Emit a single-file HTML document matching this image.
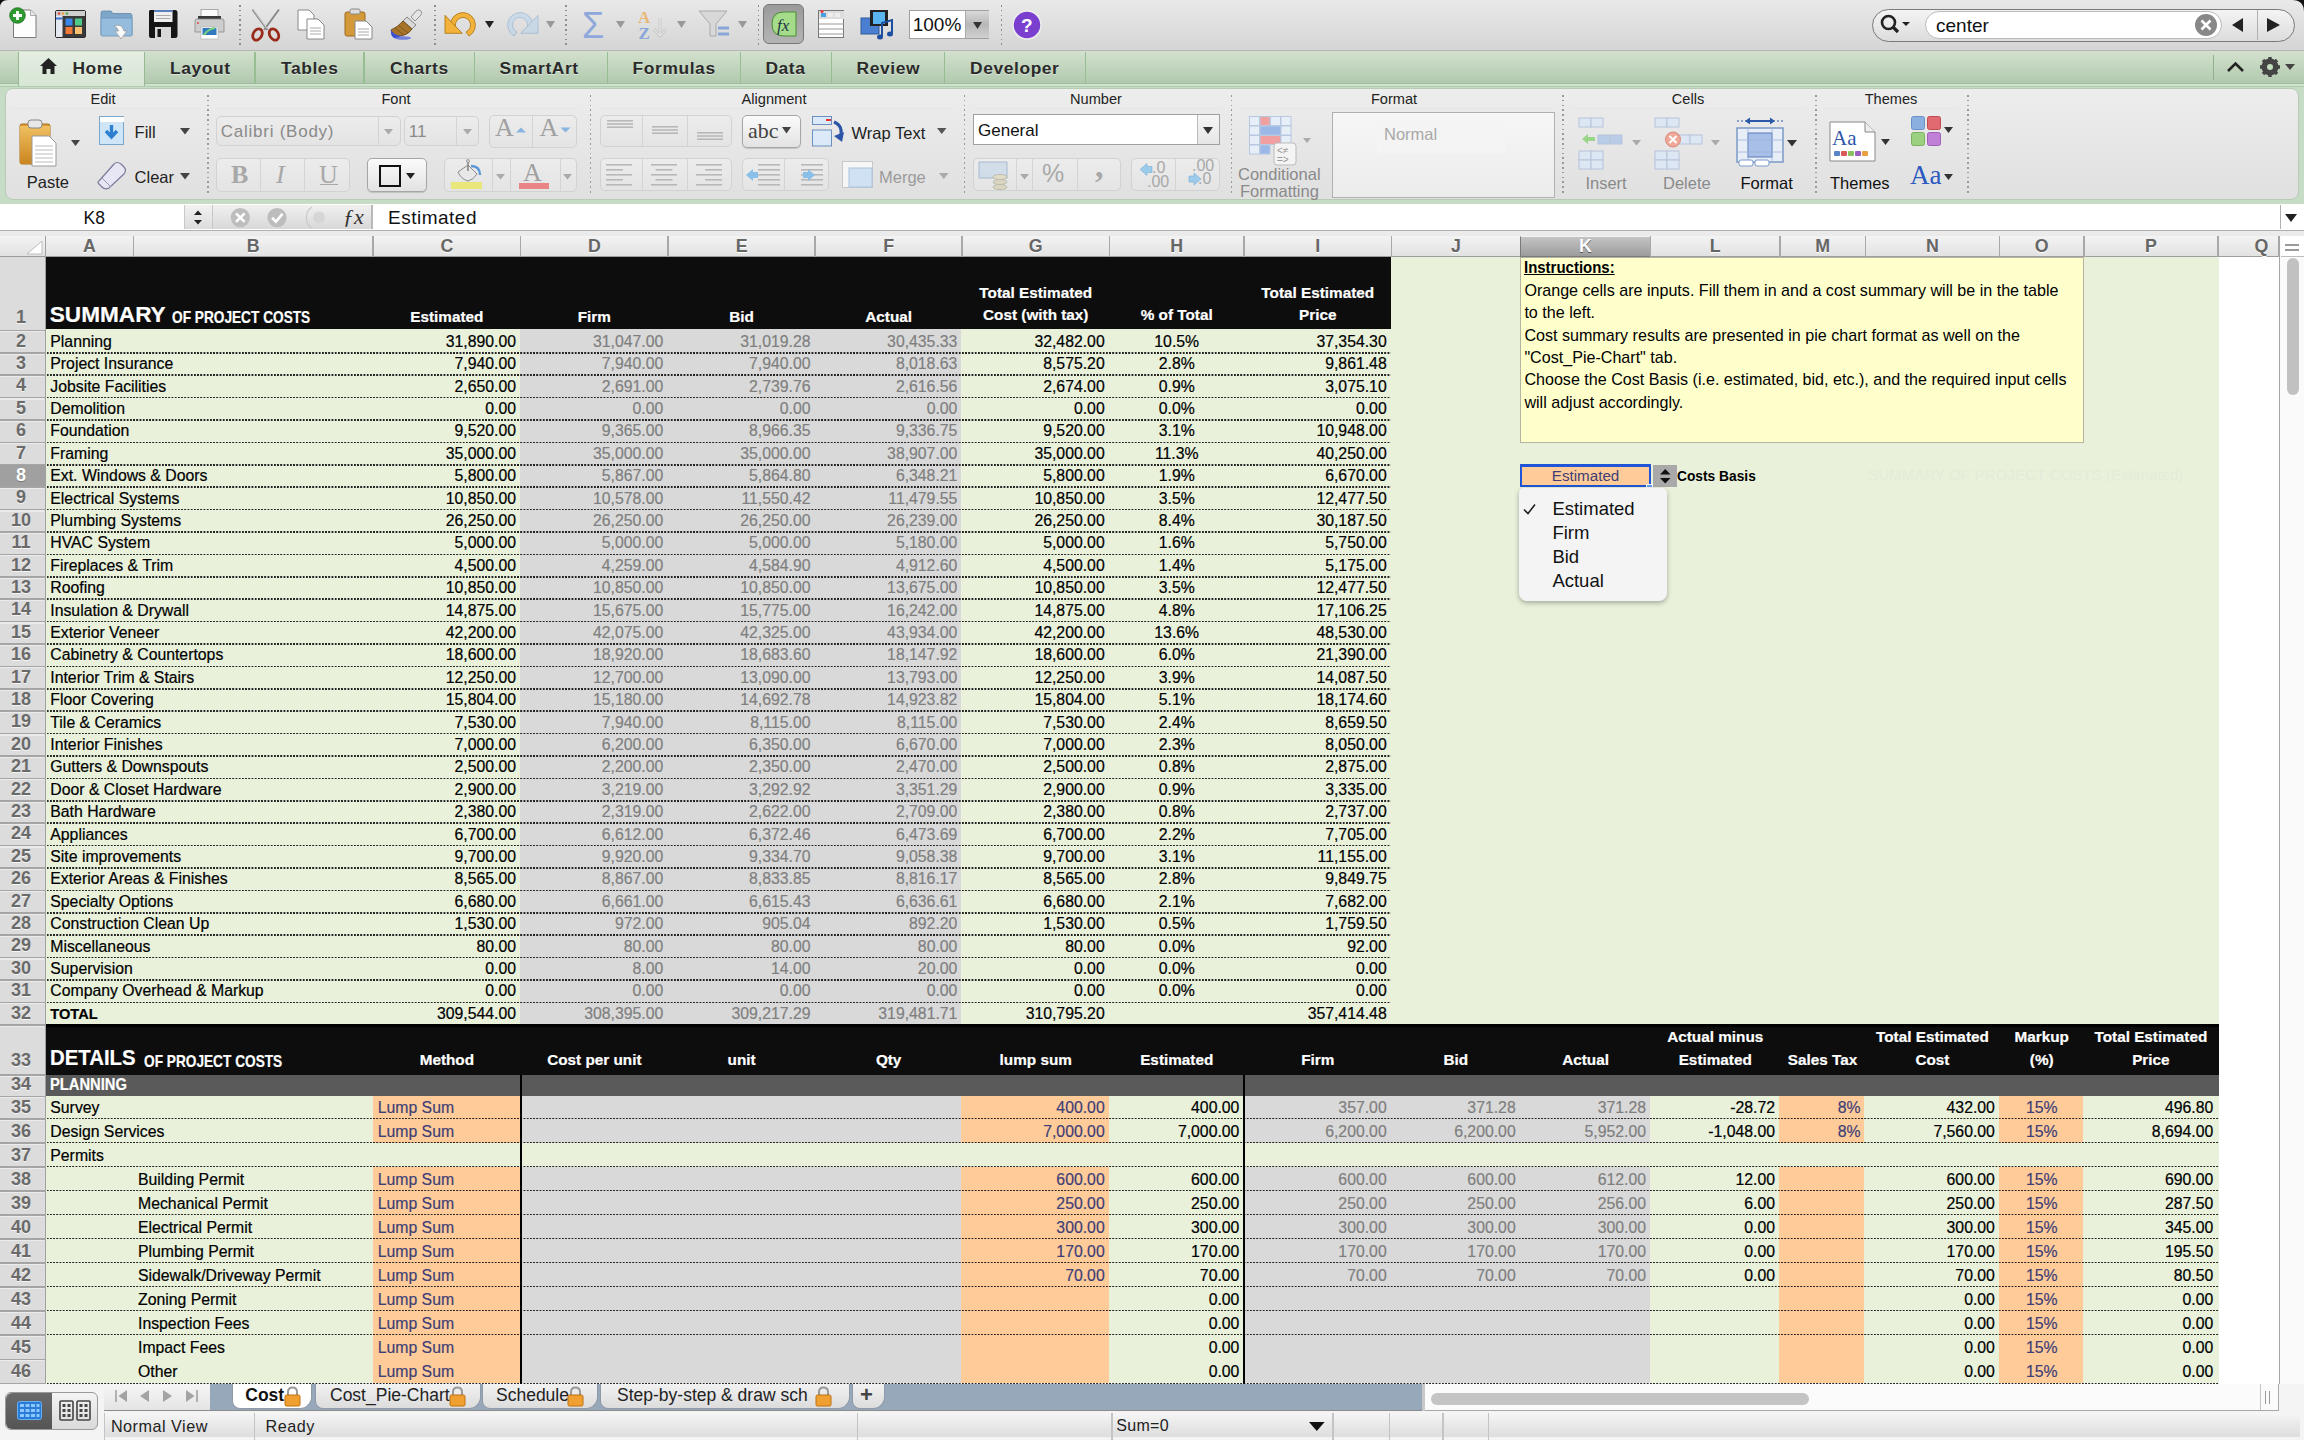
<!DOCTYPE html><html><head><meta charset="utf-8"><style>
html,body{margin:0;padding:0;width:2304px;height:1440px;overflow:hidden;background:#fff;}
body{position:relative;font-family:"Liberation Sans",sans-serif;}
div{position:absolute;box-sizing:border-box;}
.t{white-space:nowrap;line-height:20px;height:20px;color:#000;}
u,.nu{text-decoration:none}
.g .t{-webkit-text-stroke:0.2px currentColor;}
svg{position:absolute;overflow:visible}
.dot{height:1.6px;background:repeating-linear-gradient(90deg,rgba(35,35,35,1) 0px,rgba(35,35,35,1) 1.2px,rgba(35,35,35,0) 2.0px,rgba(35,35,35,0) 2.6px,rgba(35,35,35,1) 3.2px);}
</style></head><body>

<div style="left:0px;top:236px;width:2304px;height:1148px;background:#fff;"></div>
<div style="left:45.6px;top:256.8px;width:1345px;height:72.2px;background:#0d0d0d;"></div>
<div style="left:1390.6px;top:256.8px;width:828.6px;height:767.6px;background:#e9f1db;"></div>
<div style="left:45.6px;top:329px;width:1345px;height:695.4px;background:#e9f1db;"></div>
<div style="left:520.07px;top:329px;width:440.97px;height:695.4px;background:#d9d9d9;"></div>
<div class="dot" style="left:47.2px;top:352px;width:1343.4px"></div>
<div class="dot" style="left:47.2px;top:374.4px;width:1343.4px"></div>
<div class="dot" style="left:47.2px;top:396.8px;width:1343.4px"></div>
<div class="dot" style="left:47.2px;top:419.2px;width:1343.4px"></div>
<div class="dot" style="left:47.2px;top:441.6px;width:1343.4px"></div>
<div class="dot" style="left:47.2px;top:464px;width:1343.4px"></div>
<div class="dot" style="left:47.2px;top:486.4px;width:1343.4px"></div>
<div class="dot" style="left:47.2px;top:508.8px;width:1343.4px"></div>
<div class="dot" style="left:47.2px;top:531.2px;width:1343.4px"></div>
<div class="dot" style="left:47.2px;top:553.6px;width:1343.4px"></div>
<div class="dot" style="left:47.2px;top:576px;width:1343.4px"></div>
<div class="dot" style="left:47.2px;top:598.4px;width:1343.4px"></div>
<div class="dot" style="left:47.2px;top:620.8px;width:1343.4px"></div>
<div class="dot" style="left:47.2px;top:643.2px;width:1343.4px"></div>
<div class="dot" style="left:47.2px;top:665.6px;width:1343.4px"></div>
<div class="dot" style="left:47.2px;top:688px;width:1343.4px"></div>
<div class="dot" style="left:47.2px;top:710.4px;width:1343.4px"></div>
<div class="dot" style="left:47.2px;top:732.8px;width:1343.4px"></div>
<div class="dot" style="left:47.2px;top:755.2px;width:1343.4px"></div>
<div class="dot" style="left:47.2px;top:777.6px;width:1343.4px"></div>
<div class="dot" style="left:47.2px;top:800px;width:1343.4px"></div>
<div class="dot" style="left:47.2px;top:822.4px;width:1343.4px"></div>
<div class="dot" style="left:47.2px;top:844.8px;width:1343.4px"></div>
<div class="dot" style="left:47.2px;top:867.2px;width:1343.4px"></div>
<div class="dot" style="left:47.2px;top:889.6px;width:1343.4px"></div>
<div class="dot" style="left:47.2px;top:912px;width:1343.4px"></div>
<div class="dot" style="left:47.2px;top:934.4px;width:1343.4px"></div>
<div class="dot" style="left:47.2px;top:956.8px;width:1343.4px"></div>
<div class="dot" style="left:47.2px;top:979.2px;width:1343.4px"></div>
<div class="dot" style="left:47.2px;top:1001.6px;width:1343.4px"></div>
<div style="left:45.6px;top:1024.2px;width:2173.6px;height:50.7px;background:#0d0d0d;"></div>
<div style="left:45.6px;top:1024.2px;width:2173.6px;height:2.8px;background:#000;"></div>
<div style="left:45.6px;top:1074.9px;width:2173.6px;height:21px;background:#5a5a5a;"></div>
<div style="left:45.6px;top:1096.3px;width:2173.6px;height:22.6px;background:#e9f1db;"></div>
<div style="left:372.85px;top:1096.3px;width:147.22px;height:22.6px;background:#ffcc99;"></div>
<div style="left:961.04px;top:1096.3px;width:147.76px;height:22.6px;background:#ffcc99;"></div>
<div style="left:1779.3px;top:1096.3px;width:84.9px;height:22.6px;background:#ffcc99;"></div>
<div style="left:1999px;top:1096.3px;width:84.3px;height:22.6px;background:#ffcc99;"></div>
<div style="left:520.07px;top:1096.3px;width:440.97px;height:22.6px;background:#d9d9d9;"></div>
<div style="left:1244.05px;top:1096.3px;width:405.55px;height:22.6px;background:#d9d9d9;"></div>
<div class="dot" style="left:47.2px;top:1118.1px;width:2172px"></div>
<div style="left:45.6px;top:1118.9px;width:2173.6px;height:24.04px;background:#e9f1db;"></div>
<div style="left:372.85px;top:1118.9px;width:147.22px;height:24.04px;background:#ffcc99;"></div>
<div style="left:961.04px;top:1118.9px;width:147.76px;height:24.04px;background:#ffcc99;"></div>
<div style="left:1779.3px;top:1118.9px;width:84.9px;height:24.04px;background:#ffcc99;"></div>
<div style="left:1999px;top:1118.9px;width:84.3px;height:24.04px;background:#ffcc99;"></div>
<div style="left:520.07px;top:1118.9px;width:440.97px;height:24.04px;background:#d9d9d9;"></div>
<div style="left:1244.05px;top:1118.9px;width:405.55px;height:24.04px;background:#d9d9d9;"></div>
<div class="dot" style="left:47.2px;top:1142.14px;width:2172px"></div>
<div style="left:45.6px;top:1142.94px;width:2173.6px;height:24.04px;background:#e9f1db;"></div>
<div class="dot" style="left:47.2px;top:1166.18px;width:2172px"></div>
<div style="left:45.6px;top:1166.98px;width:2173.6px;height:24.04px;background:#e9f1db;"></div>
<div style="left:372.85px;top:1166.98px;width:147.22px;height:24.04px;background:#ffcc99;"></div>
<div style="left:961.04px;top:1166.98px;width:147.76px;height:24.04px;background:#ffcc99;"></div>
<div style="left:1779.3px;top:1166.98px;width:84.9px;height:24.04px;background:#ffcc99;"></div>
<div style="left:1999px;top:1166.98px;width:84.3px;height:24.04px;background:#ffcc99;"></div>
<div style="left:520.07px;top:1166.98px;width:440.97px;height:24.04px;background:#d9d9d9;"></div>
<div style="left:1244.05px;top:1166.98px;width:405.55px;height:24.04px;background:#d9d9d9;"></div>
<div class="dot" style="left:47.2px;top:1190.22px;width:2172px"></div>
<div style="left:45.6px;top:1191.02px;width:2173.6px;height:24.04px;background:#e9f1db;"></div>
<div style="left:372.85px;top:1191.02px;width:147.22px;height:24.04px;background:#ffcc99;"></div>
<div style="left:961.04px;top:1191.02px;width:147.76px;height:24.04px;background:#ffcc99;"></div>
<div style="left:1779.3px;top:1191.02px;width:84.9px;height:24.04px;background:#ffcc99;"></div>
<div style="left:1999px;top:1191.02px;width:84.3px;height:24.04px;background:#ffcc99;"></div>
<div style="left:520.07px;top:1191.02px;width:440.97px;height:24.04px;background:#d9d9d9;"></div>
<div style="left:1244.05px;top:1191.02px;width:405.55px;height:24.04px;background:#d9d9d9;"></div>
<div class="dot" style="left:47.2px;top:1214.26px;width:2172px"></div>
<div style="left:45.6px;top:1215.06px;width:2173.6px;height:24.04px;background:#e9f1db;"></div>
<div style="left:372.85px;top:1215.06px;width:147.22px;height:24.04px;background:#ffcc99;"></div>
<div style="left:961.04px;top:1215.06px;width:147.76px;height:24.04px;background:#ffcc99;"></div>
<div style="left:1779.3px;top:1215.06px;width:84.9px;height:24.04px;background:#ffcc99;"></div>
<div style="left:1999px;top:1215.06px;width:84.3px;height:24.04px;background:#ffcc99;"></div>
<div style="left:520.07px;top:1215.06px;width:440.97px;height:24.04px;background:#d9d9d9;"></div>
<div style="left:1244.05px;top:1215.06px;width:405.55px;height:24.04px;background:#d9d9d9;"></div>
<div class="dot" style="left:47.2px;top:1238.3px;width:2172px"></div>
<div style="left:45.6px;top:1239.1px;width:2173.6px;height:24.04px;background:#e9f1db;"></div>
<div style="left:372.85px;top:1239.1px;width:147.22px;height:24.04px;background:#ffcc99;"></div>
<div style="left:961.04px;top:1239.1px;width:147.76px;height:24.04px;background:#ffcc99;"></div>
<div style="left:1779.3px;top:1239.1px;width:84.9px;height:24.04px;background:#ffcc99;"></div>
<div style="left:1999px;top:1239.1px;width:84.3px;height:24.04px;background:#ffcc99;"></div>
<div style="left:520.07px;top:1239.1px;width:440.97px;height:24.04px;background:#d9d9d9;"></div>
<div style="left:1244.05px;top:1239.1px;width:405.55px;height:24.04px;background:#d9d9d9;"></div>
<div class="dot" style="left:47.2px;top:1262.34px;width:2172px"></div>
<div style="left:45.6px;top:1263.14px;width:2173.6px;height:24.04px;background:#e9f1db;"></div>
<div style="left:372.85px;top:1263.14px;width:147.22px;height:24.04px;background:#ffcc99;"></div>
<div style="left:961.04px;top:1263.14px;width:147.76px;height:24.04px;background:#ffcc99;"></div>
<div style="left:1779.3px;top:1263.14px;width:84.9px;height:24.04px;background:#ffcc99;"></div>
<div style="left:1999px;top:1263.14px;width:84.3px;height:24.04px;background:#ffcc99;"></div>
<div style="left:520.07px;top:1263.14px;width:440.97px;height:24.04px;background:#d9d9d9;"></div>
<div style="left:1244.05px;top:1263.14px;width:405.55px;height:24.04px;background:#d9d9d9;"></div>
<div class="dot" style="left:47.2px;top:1286.38px;width:2172px"></div>
<div style="left:45.6px;top:1287.18px;width:2173.6px;height:24.04px;background:#e9f1db;"></div>
<div style="left:372.85px;top:1287.18px;width:147.22px;height:24.04px;background:#ffcc99;"></div>
<div style="left:961.04px;top:1287.18px;width:147.76px;height:24.04px;background:#ffcc99;"></div>
<div style="left:1779.3px;top:1287.18px;width:84.9px;height:24.04px;background:#ffcc99;"></div>
<div style="left:1999px;top:1287.18px;width:84.3px;height:24.04px;background:#ffcc99;"></div>
<div style="left:520.07px;top:1287.18px;width:440.97px;height:24.04px;background:#d9d9d9;"></div>
<div style="left:1244.05px;top:1287.18px;width:405.55px;height:24.04px;background:#d9d9d9;"></div>
<div class="dot" style="left:47.2px;top:1310.42px;width:2172px"></div>
<div style="left:45.6px;top:1311.22px;width:2173.6px;height:24.04px;background:#e9f1db;"></div>
<div style="left:372.85px;top:1311.22px;width:147.22px;height:24.04px;background:#ffcc99;"></div>
<div style="left:961.04px;top:1311.22px;width:147.76px;height:24.04px;background:#ffcc99;"></div>
<div style="left:1779.3px;top:1311.22px;width:84.9px;height:24.04px;background:#ffcc99;"></div>
<div style="left:1999px;top:1311.22px;width:84.3px;height:24.04px;background:#ffcc99;"></div>
<div style="left:520.07px;top:1311.22px;width:440.97px;height:24.04px;background:#d9d9d9;"></div>
<div style="left:1244.05px;top:1311.22px;width:405.55px;height:24.04px;background:#d9d9d9;"></div>
<div class="dot" style="left:47.2px;top:1334.46px;width:2172px"></div>
<div style="left:45.6px;top:1335.26px;width:2173.6px;height:24.04px;background:#e9f1db;"></div>
<div style="left:372.85px;top:1335.26px;width:147.22px;height:24.04px;background:#ffcc99;"></div>
<div style="left:961.04px;top:1335.26px;width:147.76px;height:24.04px;background:#ffcc99;"></div>
<div style="left:1779.3px;top:1335.26px;width:84.9px;height:24.04px;background:#ffcc99;"></div>
<div style="left:1999px;top:1335.26px;width:84.3px;height:24.04px;background:#ffcc99;"></div>
<div style="left:520.07px;top:1335.26px;width:440.97px;height:24.04px;background:#d9d9d9;"></div>
<div style="left:1244.05px;top:1335.26px;width:405.55px;height:24.04px;background:#d9d9d9;"></div>
<div class="dot" style="left:47.2px;top:1358.5px;width:2172px"></div>
<div style="left:45.6px;top:1359.3px;width:2173.6px;height:24.04px;background:#e9f1db;"></div>
<div style="left:372.85px;top:1359.3px;width:147.22px;height:24.04px;background:#ffcc99;"></div>
<div style="left:961.04px;top:1359.3px;width:147.76px;height:24.04px;background:#ffcc99;"></div>
<div style="left:1779.3px;top:1359.3px;width:84.9px;height:24.04px;background:#ffcc99;"></div>
<div style="left:1999px;top:1359.3px;width:84.3px;height:24.04px;background:#ffcc99;"></div>
<div style="left:520.07px;top:1359.3px;width:440.97px;height:24.04px;background:#d9d9d9;"></div>
<div style="left:1244.05px;top:1359.3px;width:405.55px;height:24.04px;background:#d9d9d9;"></div>
<div class="dot" style="left:47.2px;top:1382.54px;width:2172px"></div>
<div style="left:519.5px;top:1074.9px;width:2.4px;height:309.24px;background:#000;"></div>
<div style="left:1242.9px;top:1074.9px;width:2.4px;height:309.24px;background:#000;"></div>
<div class="g" style="left:0;top:0">
<div class="t" style="left:50.3px;top:331.73px;font-size:15.8px;">Planning</div>
<div class="t" style="left:373px;width:143px;text-align:right;top:331.73px;font-size:15.8px;color:#000;">31,890.00</div>
<div class="t" style="left:520.7px;width:142.6px;text-align:right;top:331.73px;font-size:15.8px;color:#7f7f7f;">31,047.00</div>
<div class="t" style="left:668px;width:142.5px;text-align:right;top:331.73px;font-size:15.8px;color:#7f7f7f;">31,019.28</div>
<div class="t" style="left:815.2px;width:142.2px;text-align:right;top:331.73px;font-size:15.8px;color:#7f7f7f;">30,435.33</div>
<div class="t" style="left:962.1px;width:142.6px;text-align:right;top:331.73px;font-size:15.8px;color:#000;">32,482.00</div>
<div class="t" style="left:1109.4px;width:134.7px;text-align:center;top:331.73px;font-size:15.8px;color:#000;">10.5%</div>
<div class="t" style="left:1244.1px;width:142.6px;text-align:right;top:331.73px;font-size:15.8px;color:#000;">37,354.30</div>
<div class="t" style="left:50.3px;top:354.13px;font-size:15.8px;">Project Insurance</div>
<div class="t" style="left:373px;width:143px;text-align:right;top:354.13px;font-size:15.8px;color:#000;">7,940.00</div>
<div class="t" style="left:520.7px;width:142.6px;text-align:right;top:354.13px;font-size:15.8px;color:#7f7f7f;">7,940.00</div>
<div class="t" style="left:668px;width:142.5px;text-align:right;top:354.13px;font-size:15.8px;color:#7f7f7f;">7,940.00</div>
<div class="t" style="left:815.2px;width:142.2px;text-align:right;top:354.13px;font-size:15.8px;color:#7f7f7f;">8,018.63</div>
<div class="t" style="left:962.1px;width:142.6px;text-align:right;top:354.13px;font-size:15.8px;color:#000;">8,575.20</div>
<div class="t" style="left:1109.4px;width:134.7px;text-align:center;top:354.13px;font-size:15.8px;color:#000;">2.8%</div>
<div class="t" style="left:1244.1px;width:142.6px;text-align:right;top:354.13px;font-size:15.8px;color:#000;">9,861.48</div>
<div class="t" style="left:50.3px;top:376.53px;font-size:15.8px;">Jobsite Facilities</div>
<div class="t" style="left:373px;width:143px;text-align:right;top:376.53px;font-size:15.8px;color:#000;">2,650.00</div>
<div class="t" style="left:520.7px;width:142.6px;text-align:right;top:376.53px;font-size:15.8px;color:#7f7f7f;">2,691.00</div>
<div class="t" style="left:668px;width:142.5px;text-align:right;top:376.53px;font-size:15.8px;color:#7f7f7f;">2,739.76</div>
<div class="t" style="left:815.2px;width:142.2px;text-align:right;top:376.53px;font-size:15.8px;color:#7f7f7f;">2,616.56</div>
<div class="t" style="left:962.1px;width:142.6px;text-align:right;top:376.53px;font-size:15.8px;color:#000;">2,674.00</div>
<div class="t" style="left:1109.4px;width:134.7px;text-align:center;top:376.53px;font-size:15.8px;color:#000;">0.9%</div>
<div class="t" style="left:1244.1px;width:142.6px;text-align:right;top:376.53px;font-size:15.8px;color:#000;">3,075.10</div>
<div class="t" style="left:50.3px;top:398.93px;font-size:15.8px;">Demolition</div>
<div class="t" style="left:373px;width:143px;text-align:right;top:398.93px;font-size:15.8px;color:#000;">0.00</div>
<div class="t" style="left:520.7px;width:142.6px;text-align:right;top:398.93px;font-size:15.8px;color:#7f7f7f;">0.00</div>
<div class="t" style="left:668px;width:142.5px;text-align:right;top:398.93px;font-size:15.8px;color:#7f7f7f;">0.00</div>
<div class="t" style="left:815.2px;width:142.2px;text-align:right;top:398.93px;font-size:15.8px;color:#7f7f7f;">0.00</div>
<div class="t" style="left:962.1px;width:142.6px;text-align:right;top:398.93px;font-size:15.8px;color:#000;">0.00</div>
<div class="t" style="left:1109.4px;width:134.7px;text-align:center;top:398.93px;font-size:15.8px;color:#000;">0.0%</div>
<div class="t" style="left:1244.1px;width:142.6px;text-align:right;top:398.93px;font-size:15.8px;color:#000;">0.00</div>
<div class="t" style="left:50.3px;top:421.33px;font-size:15.8px;">Foundation</div>
<div class="t" style="left:373px;width:143px;text-align:right;top:421.33px;font-size:15.8px;color:#000;">9,520.00</div>
<div class="t" style="left:520.7px;width:142.6px;text-align:right;top:421.33px;font-size:15.8px;color:#7f7f7f;">9,365.00</div>
<div class="t" style="left:668px;width:142.5px;text-align:right;top:421.33px;font-size:15.8px;color:#7f7f7f;">8,966.35</div>
<div class="t" style="left:815.2px;width:142.2px;text-align:right;top:421.33px;font-size:15.8px;color:#7f7f7f;">9,336.75</div>
<div class="t" style="left:962.1px;width:142.6px;text-align:right;top:421.33px;font-size:15.8px;color:#000;">9,520.00</div>
<div class="t" style="left:1109.4px;width:134.7px;text-align:center;top:421.33px;font-size:15.8px;color:#000;">3.1%</div>
<div class="t" style="left:1244.1px;width:142.6px;text-align:right;top:421.33px;font-size:15.8px;color:#000;">10,948.00</div>
<div class="t" style="left:50.3px;top:443.73px;font-size:15.8px;">Framing</div>
<div class="t" style="left:373px;width:143px;text-align:right;top:443.73px;font-size:15.8px;color:#000;">35,000.00</div>
<div class="t" style="left:520.7px;width:142.6px;text-align:right;top:443.73px;font-size:15.8px;color:#7f7f7f;">35,000.00</div>
<div class="t" style="left:668px;width:142.5px;text-align:right;top:443.73px;font-size:15.8px;color:#7f7f7f;">35,000.00</div>
<div class="t" style="left:815.2px;width:142.2px;text-align:right;top:443.73px;font-size:15.8px;color:#7f7f7f;">38,907.00</div>
<div class="t" style="left:962.1px;width:142.6px;text-align:right;top:443.73px;font-size:15.8px;color:#000;">35,000.00</div>
<div class="t" style="left:1109.4px;width:134.7px;text-align:center;top:443.73px;font-size:15.8px;color:#000;">11.3%</div>
<div class="t" style="left:1244.1px;width:142.6px;text-align:right;top:443.73px;font-size:15.8px;color:#000;">40,250.00</div>
<div class="t" style="left:50.3px;top:466.13px;font-size:15.8px;">Ext. Windows & Doors</div>
<div class="t" style="left:373px;width:143px;text-align:right;top:466.13px;font-size:15.8px;color:#000;">5,800.00</div>
<div class="t" style="left:520.7px;width:142.6px;text-align:right;top:466.13px;font-size:15.8px;color:#7f7f7f;">5,867.00</div>
<div class="t" style="left:668px;width:142.5px;text-align:right;top:466.13px;font-size:15.8px;color:#7f7f7f;">5,864.80</div>
<div class="t" style="left:815.2px;width:142.2px;text-align:right;top:466.13px;font-size:15.8px;color:#7f7f7f;">6,348.21</div>
<div class="t" style="left:962.1px;width:142.6px;text-align:right;top:466.13px;font-size:15.8px;color:#000;">5,800.00</div>
<div class="t" style="left:1109.4px;width:134.7px;text-align:center;top:466.13px;font-size:15.8px;color:#000;">1.9%</div>
<div class="t" style="left:1244.1px;width:142.6px;text-align:right;top:466.13px;font-size:15.8px;color:#000;">6,670.00</div>
<div class="t" style="left:50.3px;top:488.53px;font-size:15.8px;">Electrical Systems</div>
<div class="t" style="left:373px;width:143px;text-align:right;top:488.53px;font-size:15.8px;color:#000;">10,850.00</div>
<div class="t" style="left:520.7px;width:142.6px;text-align:right;top:488.53px;font-size:15.8px;color:#7f7f7f;">10,578.00</div>
<div class="t" style="left:668px;width:142.5px;text-align:right;top:488.53px;font-size:15.8px;color:#7f7f7f;">11,550.42</div>
<div class="t" style="left:815.2px;width:142.2px;text-align:right;top:488.53px;font-size:15.8px;color:#7f7f7f;">11,479.55</div>
<div class="t" style="left:962.1px;width:142.6px;text-align:right;top:488.53px;font-size:15.8px;color:#000;">10,850.00</div>
<div class="t" style="left:1109.4px;width:134.7px;text-align:center;top:488.53px;font-size:15.8px;color:#000;">3.5%</div>
<div class="t" style="left:1244.1px;width:142.6px;text-align:right;top:488.53px;font-size:15.8px;color:#000;">12,477.50</div>
<div class="t" style="left:50.3px;top:510.93px;font-size:15.8px;">Plumbing Systems</div>
<div class="t" style="left:373px;width:143px;text-align:right;top:510.93px;font-size:15.8px;color:#000;">26,250.00</div>
<div class="t" style="left:520.7px;width:142.6px;text-align:right;top:510.93px;font-size:15.8px;color:#7f7f7f;">26,250.00</div>
<div class="t" style="left:668px;width:142.5px;text-align:right;top:510.93px;font-size:15.8px;color:#7f7f7f;">26,250.00</div>
<div class="t" style="left:815.2px;width:142.2px;text-align:right;top:510.93px;font-size:15.8px;color:#7f7f7f;">26,239.00</div>
<div class="t" style="left:962.1px;width:142.6px;text-align:right;top:510.93px;font-size:15.8px;color:#000;">26,250.00</div>
<div class="t" style="left:1109.4px;width:134.7px;text-align:center;top:510.93px;font-size:15.8px;color:#000;">8.4%</div>
<div class="t" style="left:1244.1px;width:142.6px;text-align:right;top:510.93px;font-size:15.8px;color:#000;">30,187.50</div>
<div class="t" style="left:50.3px;top:533.33px;font-size:15.8px;">HVAC System</div>
<div class="t" style="left:373px;width:143px;text-align:right;top:533.33px;font-size:15.8px;color:#000;">5,000.00</div>
<div class="t" style="left:520.7px;width:142.6px;text-align:right;top:533.33px;font-size:15.8px;color:#7f7f7f;">5,000.00</div>
<div class="t" style="left:668px;width:142.5px;text-align:right;top:533.33px;font-size:15.8px;color:#7f7f7f;">5,000.00</div>
<div class="t" style="left:815.2px;width:142.2px;text-align:right;top:533.33px;font-size:15.8px;color:#7f7f7f;">5,180.00</div>
<div class="t" style="left:962.1px;width:142.6px;text-align:right;top:533.33px;font-size:15.8px;color:#000;">5,000.00</div>
<div class="t" style="left:1109.4px;width:134.7px;text-align:center;top:533.33px;font-size:15.8px;color:#000;">1.6%</div>
<div class="t" style="left:1244.1px;width:142.6px;text-align:right;top:533.33px;font-size:15.8px;color:#000;">5,750.00</div>
<div class="t" style="left:50.3px;top:555.73px;font-size:15.8px;">Fireplaces & Trim</div>
<div class="t" style="left:373px;width:143px;text-align:right;top:555.73px;font-size:15.8px;color:#000;">4,500.00</div>
<div class="t" style="left:520.7px;width:142.6px;text-align:right;top:555.73px;font-size:15.8px;color:#7f7f7f;">4,259.00</div>
<div class="t" style="left:668px;width:142.5px;text-align:right;top:555.73px;font-size:15.8px;color:#7f7f7f;">4,584.90</div>
<div class="t" style="left:815.2px;width:142.2px;text-align:right;top:555.73px;font-size:15.8px;color:#7f7f7f;">4,912.60</div>
<div class="t" style="left:962.1px;width:142.6px;text-align:right;top:555.73px;font-size:15.8px;color:#000;">4,500.00</div>
<div class="t" style="left:1109.4px;width:134.7px;text-align:center;top:555.73px;font-size:15.8px;color:#000;">1.4%</div>
<div class="t" style="left:1244.1px;width:142.6px;text-align:right;top:555.73px;font-size:15.8px;color:#000;">5,175.00</div>
<div class="t" style="left:50.3px;top:578.13px;font-size:15.8px;">Roofing</div>
<div class="t" style="left:373px;width:143px;text-align:right;top:578.13px;font-size:15.8px;color:#000;">10,850.00</div>
<div class="t" style="left:520.7px;width:142.6px;text-align:right;top:578.13px;font-size:15.8px;color:#7f7f7f;">10,850.00</div>
<div class="t" style="left:668px;width:142.5px;text-align:right;top:578.13px;font-size:15.8px;color:#7f7f7f;">10,850.00</div>
<div class="t" style="left:815.2px;width:142.2px;text-align:right;top:578.13px;font-size:15.8px;color:#7f7f7f;">13,675.00</div>
<div class="t" style="left:962.1px;width:142.6px;text-align:right;top:578.13px;font-size:15.8px;color:#000;">10,850.00</div>
<div class="t" style="left:1109.4px;width:134.7px;text-align:center;top:578.13px;font-size:15.8px;color:#000;">3.5%</div>
<div class="t" style="left:1244.1px;width:142.6px;text-align:right;top:578.13px;font-size:15.8px;color:#000;">12,477.50</div>
<div class="t" style="left:50.3px;top:600.53px;font-size:15.8px;">Insulation & Drywall</div>
<div class="t" style="left:373px;width:143px;text-align:right;top:600.53px;font-size:15.8px;color:#000;">14,875.00</div>
<div class="t" style="left:520.7px;width:142.6px;text-align:right;top:600.53px;font-size:15.8px;color:#7f7f7f;">15,675.00</div>
<div class="t" style="left:668px;width:142.5px;text-align:right;top:600.53px;font-size:15.8px;color:#7f7f7f;">15,775.00</div>
<div class="t" style="left:815.2px;width:142.2px;text-align:right;top:600.53px;font-size:15.8px;color:#7f7f7f;">16,242.00</div>
<div class="t" style="left:962.1px;width:142.6px;text-align:right;top:600.53px;font-size:15.8px;color:#000;">14,875.00</div>
<div class="t" style="left:1109.4px;width:134.7px;text-align:center;top:600.53px;font-size:15.8px;color:#000;">4.8%</div>
<div class="t" style="left:1244.1px;width:142.6px;text-align:right;top:600.53px;font-size:15.8px;color:#000;">17,106.25</div>
<div class="t" style="left:50.3px;top:622.93px;font-size:15.8px;">Exterior Veneer</div>
<div class="t" style="left:373px;width:143px;text-align:right;top:622.93px;font-size:15.8px;color:#000;">42,200.00</div>
<div class="t" style="left:520.7px;width:142.6px;text-align:right;top:622.93px;font-size:15.8px;color:#7f7f7f;">42,075.00</div>
<div class="t" style="left:668px;width:142.5px;text-align:right;top:622.93px;font-size:15.8px;color:#7f7f7f;">42,325.00</div>
<div class="t" style="left:815.2px;width:142.2px;text-align:right;top:622.93px;font-size:15.8px;color:#7f7f7f;">43,934.00</div>
<div class="t" style="left:962.1px;width:142.6px;text-align:right;top:622.93px;font-size:15.8px;color:#000;">42,200.00</div>
<div class="t" style="left:1109.4px;width:134.7px;text-align:center;top:622.93px;font-size:15.8px;color:#000;">13.6%</div>
<div class="t" style="left:1244.1px;width:142.6px;text-align:right;top:622.93px;font-size:15.8px;color:#000;">48,530.00</div>
<div class="t" style="left:50.3px;top:645.33px;font-size:15.8px;">Cabinetry & Countertops</div>
<div class="t" style="left:373px;width:143px;text-align:right;top:645.33px;font-size:15.8px;color:#000;">18,600.00</div>
<div class="t" style="left:520.7px;width:142.6px;text-align:right;top:645.33px;font-size:15.8px;color:#7f7f7f;">18,920.00</div>
<div class="t" style="left:668px;width:142.5px;text-align:right;top:645.33px;font-size:15.8px;color:#7f7f7f;">18,683.60</div>
<div class="t" style="left:815.2px;width:142.2px;text-align:right;top:645.33px;font-size:15.8px;color:#7f7f7f;">18,147.92</div>
<div class="t" style="left:962.1px;width:142.6px;text-align:right;top:645.33px;font-size:15.8px;color:#000;">18,600.00</div>
<div class="t" style="left:1109.4px;width:134.7px;text-align:center;top:645.33px;font-size:15.8px;color:#000;">6.0%</div>
<div class="t" style="left:1244.1px;width:142.6px;text-align:right;top:645.33px;font-size:15.8px;color:#000;">21,390.00</div>
<div class="t" style="left:50.3px;top:667.73px;font-size:15.8px;">Interior Trim & Stairs</div>
<div class="t" style="left:373px;width:143px;text-align:right;top:667.73px;font-size:15.8px;color:#000;">12,250.00</div>
<div class="t" style="left:520.7px;width:142.6px;text-align:right;top:667.73px;font-size:15.8px;color:#7f7f7f;">12,700.00</div>
<div class="t" style="left:668px;width:142.5px;text-align:right;top:667.73px;font-size:15.8px;color:#7f7f7f;">13,090.00</div>
<div class="t" style="left:815.2px;width:142.2px;text-align:right;top:667.73px;font-size:15.8px;color:#7f7f7f;">13,793.00</div>
<div class="t" style="left:962.1px;width:142.6px;text-align:right;top:667.73px;font-size:15.8px;color:#000;">12,250.00</div>
<div class="t" style="left:1109.4px;width:134.7px;text-align:center;top:667.73px;font-size:15.8px;color:#000;">3.9%</div>
<div class="t" style="left:1244.1px;width:142.6px;text-align:right;top:667.73px;font-size:15.8px;color:#000;">14,087.50</div>
<div class="t" style="left:50.3px;top:690.13px;font-size:15.8px;">Floor Covering</div>
<div class="t" style="left:373px;width:143px;text-align:right;top:690.13px;font-size:15.8px;color:#000;">15,804.00</div>
<div class="t" style="left:520.7px;width:142.6px;text-align:right;top:690.13px;font-size:15.8px;color:#7f7f7f;">15,180.00</div>
<div class="t" style="left:668px;width:142.5px;text-align:right;top:690.13px;font-size:15.8px;color:#7f7f7f;">14,692.78</div>
<div class="t" style="left:815.2px;width:142.2px;text-align:right;top:690.13px;font-size:15.8px;color:#7f7f7f;">14,923.82</div>
<div class="t" style="left:962.1px;width:142.6px;text-align:right;top:690.13px;font-size:15.8px;color:#000;">15,804.00</div>
<div class="t" style="left:1109.4px;width:134.7px;text-align:center;top:690.13px;font-size:15.8px;color:#000;">5.1%</div>
<div class="t" style="left:1244.1px;width:142.6px;text-align:right;top:690.13px;font-size:15.8px;color:#000;">18,174.60</div>
<div class="t" style="left:50.3px;top:712.53px;font-size:15.8px;">Tile & Ceramics</div>
<div class="t" style="left:373px;width:143px;text-align:right;top:712.53px;font-size:15.8px;color:#000;">7,530.00</div>
<div class="t" style="left:520.7px;width:142.6px;text-align:right;top:712.53px;font-size:15.8px;color:#7f7f7f;">7,940.00</div>
<div class="t" style="left:668px;width:142.5px;text-align:right;top:712.53px;font-size:15.8px;color:#7f7f7f;">8,115.00</div>
<div class="t" style="left:815.2px;width:142.2px;text-align:right;top:712.53px;font-size:15.8px;color:#7f7f7f;">8,115.00</div>
<div class="t" style="left:962.1px;width:142.6px;text-align:right;top:712.53px;font-size:15.8px;color:#000;">7,530.00</div>
<div class="t" style="left:1109.4px;width:134.7px;text-align:center;top:712.53px;font-size:15.8px;color:#000;">2.4%</div>
<div class="t" style="left:1244.1px;width:142.6px;text-align:right;top:712.53px;font-size:15.8px;color:#000;">8,659.50</div>
<div class="t" style="left:50.3px;top:734.93px;font-size:15.8px;">Interior Finishes</div>
<div class="t" style="left:373px;width:143px;text-align:right;top:734.93px;font-size:15.8px;color:#000;">7,000.00</div>
<div class="t" style="left:520.7px;width:142.6px;text-align:right;top:734.93px;font-size:15.8px;color:#7f7f7f;">6,200.00</div>
<div class="t" style="left:668px;width:142.5px;text-align:right;top:734.93px;font-size:15.8px;color:#7f7f7f;">6,350.00</div>
<div class="t" style="left:815.2px;width:142.2px;text-align:right;top:734.93px;font-size:15.8px;color:#7f7f7f;">6,670.00</div>
<div class="t" style="left:962.1px;width:142.6px;text-align:right;top:734.93px;font-size:15.8px;color:#000;">7,000.00</div>
<div class="t" style="left:1109.4px;width:134.7px;text-align:center;top:734.93px;font-size:15.8px;color:#000;">2.3%</div>
<div class="t" style="left:1244.1px;width:142.6px;text-align:right;top:734.93px;font-size:15.8px;color:#000;">8,050.00</div>
<div class="t" style="left:50.3px;top:757.33px;font-size:15.8px;">Gutters & Downspouts</div>
<div class="t" style="left:373px;width:143px;text-align:right;top:757.33px;font-size:15.8px;color:#000;">2,500.00</div>
<div class="t" style="left:520.7px;width:142.6px;text-align:right;top:757.33px;font-size:15.8px;color:#7f7f7f;">2,200.00</div>
<div class="t" style="left:668px;width:142.5px;text-align:right;top:757.33px;font-size:15.8px;color:#7f7f7f;">2,350.00</div>
<div class="t" style="left:815.2px;width:142.2px;text-align:right;top:757.33px;font-size:15.8px;color:#7f7f7f;">2,470.00</div>
<div class="t" style="left:962.1px;width:142.6px;text-align:right;top:757.33px;font-size:15.8px;color:#000;">2,500.00</div>
<div class="t" style="left:1109.4px;width:134.7px;text-align:center;top:757.33px;font-size:15.8px;color:#000;">0.8%</div>
<div class="t" style="left:1244.1px;width:142.6px;text-align:right;top:757.33px;font-size:15.8px;color:#000;">2,875.00</div>
<div class="t" style="left:50.3px;top:779.73px;font-size:15.8px;">Door & Closet Hardware</div>
<div class="t" style="left:373px;width:143px;text-align:right;top:779.73px;font-size:15.8px;color:#000;">2,900.00</div>
<div class="t" style="left:520.7px;width:142.6px;text-align:right;top:779.73px;font-size:15.8px;color:#7f7f7f;">3,219.00</div>
<div class="t" style="left:668px;width:142.5px;text-align:right;top:779.73px;font-size:15.8px;color:#7f7f7f;">3,292.92</div>
<div class="t" style="left:815.2px;width:142.2px;text-align:right;top:779.73px;font-size:15.8px;color:#7f7f7f;">3,351.29</div>
<div class="t" style="left:962.1px;width:142.6px;text-align:right;top:779.73px;font-size:15.8px;color:#000;">2,900.00</div>
<div class="t" style="left:1109.4px;width:134.7px;text-align:center;top:779.73px;font-size:15.8px;color:#000;">0.9%</div>
<div class="t" style="left:1244.1px;width:142.6px;text-align:right;top:779.73px;font-size:15.8px;color:#000;">3,335.00</div>
<div class="t" style="left:50.3px;top:802.13px;font-size:15.8px;">Bath Hardware</div>
<div class="t" style="left:373px;width:143px;text-align:right;top:802.13px;font-size:15.8px;color:#000;">2,380.00</div>
<div class="t" style="left:520.7px;width:142.6px;text-align:right;top:802.13px;font-size:15.8px;color:#7f7f7f;">2,319.00</div>
<div class="t" style="left:668px;width:142.5px;text-align:right;top:802.13px;font-size:15.8px;color:#7f7f7f;">2,622.00</div>
<div class="t" style="left:815.2px;width:142.2px;text-align:right;top:802.13px;font-size:15.8px;color:#7f7f7f;">2,709.00</div>
<div class="t" style="left:962.1px;width:142.6px;text-align:right;top:802.13px;font-size:15.8px;color:#000;">2,380.00</div>
<div class="t" style="left:1109.4px;width:134.7px;text-align:center;top:802.13px;font-size:15.8px;color:#000;">0.8%</div>
<div class="t" style="left:1244.1px;width:142.6px;text-align:right;top:802.13px;font-size:15.8px;color:#000;">2,737.00</div>
<div class="t" style="left:50.3px;top:824.53px;font-size:15.8px;">Appliances</div>
<div class="t" style="left:373px;width:143px;text-align:right;top:824.53px;font-size:15.8px;color:#000;">6,700.00</div>
<div class="t" style="left:520.7px;width:142.6px;text-align:right;top:824.53px;font-size:15.8px;color:#7f7f7f;">6,612.00</div>
<div class="t" style="left:668px;width:142.5px;text-align:right;top:824.53px;font-size:15.8px;color:#7f7f7f;">6,372.46</div>
<div class="t" style="left:815.2px;width:142.2px;text-align:right;top:824.53px;font-size:15.8px;color:#7f7f7f;">6,473.69</div>
<div class="t" style="left:962.1px;width:142.6px;text-align:right;top:824.53px;font-size:15.8px;color:#000;">6,700.00</div>
<div class="t" style="left:1109.4px;width:134.7px;text-align:center;top:824.53px;font-size:15.8px;color:#000;">2.2%</div>
<div class="t" style="left:1244.1px;width:142.6px;text-align:right;top:824.53px;font-size:15.8px;color:#000;">7,705.00</div>
<div class="t" style="left:50.3px;top:846.93px;font-size:15.8px;">Site improvements</div>
<div class="t" style="left:373px;width:143px;text-align:right;top:846.93px;font-size:15.8px;color:#000;">9,700.00</div>
<div class="t" style="left:520.7px;width:142.6px;text-align:right;top:846.93px;font-size:15.8px;color:#7f7f7f;">9,920.00</div>
<div class="t" style="left:668px;width:142.5px;text-align:right;top:846.93px;font-size:15.8px;color:#7f7f7f;">9,334.70</div>
<div class="t" style="left:815.2px;width:142.2px;text-align:right;top:846.93px;font-size:15.8px;color:#7f7f7f;">9,058.38</div>
<div class="t" style="left:962.1px;width:142.6px;text-align:right;top:846.93px;font-size:15.8px;color:#000;">9,700.00</div>
<div class="t" style="left:1109.4px;width:134.7px;text-align:center;top:846.93px;font-size:15.8px;color:#000;">3.1%</div>
<div class="t" style="left:1244.1px;width:142.6px;text-align:right;top:846.93px;font-size:15.8px;color:#000;">11,155.00</div>
<div class="t" style="left:50.3px;top:869.33px;font-size:15.8px;">Exterior Areas & Finishes</div>
<div class="t" style="left:373px;width:143px;text-align:right;top:869.33px;font-size:15.8px;color:#000;">8,565.00</div>
<div class="t" style="left:520.7px;width:142.6px;text-align:right;top:869.33px;font-size:15.8px;color:#7f7f7f;">8,867.00</div>
<div class="t" style="left:668px;width:142.5px;text-align:right;top:869.33px;font-size:15.8px;color:#7f7f7f;">8,833.85</div>
<div class="t" style="left:815.2px;width:142.2px;text-align:right;top:869.33px;font-size:15.8px;color:#7f7f7f;">8,816.17</div>
<div class="t" style="left:962.1px;width:142.6px;text-align:right;top:869.33px;font-size:15.8px;color:#000;">8,565.00</div>
<div class="t" style="left:1109.4px;width:134.7px;text-align:center;top:869.33px;font-size:15.8px;color:#000;">2.8%</div>
<div class="t" style="left:1244.1px;width:142.6px;text-align:right;top:869.33px;font-size:15.8px;color:#000;">9,849.75</div>
<div class="t" style="left:50.3px;top:891.73px;font-size:15.8px;">Specialty Options</div>
<div class="t" style="left:373px;width:143px;text-align:right;top:891.73px;font-size:15.8px;color:#000;">6,680.00</div>
<div class="t" style="left:520.7px;width:142.6px;text-align:right;top:891.73px;font-size:15.8px;color:#7f7f7f;">6,661.00</div>
<div class="t" style="left:668px;width:142.5px;text-align:right;top:891.73px;font-size:15.8px;color:#7f7f7f;">6,615.43</div>
<div class="t" style="left:815.2px;width:142.2px;text-align:right;top:891.73px;font-size:15.8px;color:#7f7f7f;">6,636.61</div>
<div class="t" style="left:962.1px;width:142.6px;text-align:right;top:891.73px;font-size:15.8px;color:#000;">6,680.00</div>
<div class="t" style="left:1109.4px;width:134.7px;text-align:center;top:891.73px;font-size:15.8px;color:#000;">2.1%</div>
<div class="t" style="left:1244.1px;width:142.6px;text-align:right;top:891.73px;font-size:15.8px;color:#000;">7,682.00</div>
<div class="t" style="left:50.3px;top:914.13px;font-size:15.8px;">Construction Clean Up</div>
<div class="t" style="left:373px;width:143px;text-align:right;top:914.13px;font-size:15.8px;color:#000;">1,530.00</div>
<div class="t" style="left:520.7px;width:142.6px;text-align:right;top:914.13px;font-size:15.8px;color:#7f7f7f;">972.00</div>
<div class="t" style="left:668px;width:142.5px;text-align:right;top:914.13px;font-size:15.8px;color:#7f7f7f;">905.04</div>
<div class="t" style="left:815.2px;width:142.2px;text-align:right;top:914.13px;font-size:15.8px;color:#7f7f7f;">892.20</div>
<div class="t" style="left:962.1px;width:142.6px;text-align:right;top:914.13px;font-size:15.8px;color:#000;">1,530.00</div>
<div class="t" style="left:1109.4px;width:134.7px;text-align:center;top:914.13px;font-size:15.8px;color:#000;">0.5%</div>
<div class="t" style="left:1244.1px;width:142.6px;text-align:right;top:914.13px;font-size:15.8px;color:#000;">1,759.50</div>
<div class="t" style="left:50.3px;top:936.53px;font-size:15.8px;">Miscellaneous</div>
<div class="t" style="left:373px;width:143px;text-align:right;top:936.53px;font-size:15.8px;color:#000;">80.00</div>
<div class="t" style="left:520.7px;width:142.6px;text-align:right;top:936.53px;font-size:15.8px;color:#7f7f7f;">80.00</div>
<div class="t" style="left:668px;width:142.5px;text-align:right;top:936.53px;font-size:15.8px;color:#7f7f7f;">80.00</div>
<div class="t" style="left:815.2px;width:142.2px;text-align:right;top:936.53px;font-size:15.8px;color:#7f7f7f;">80.00</div>
<div class="t" style="left:962.1px;width:142.6px;text-align:right;top:936.53px;font-size:15.8px;color:#000;">80.00</div>
<div class="t" style="left:1109.4px;width:134.7px;text-align:center;top:936.53px;font-size:15.8px;color:#000;">0.0%</div>
<div class="t" style="left:1244.1px;width:142.6px;text-align:right;top:936.53px;font-size:15.8px;color:#000;">92.00</div>
<div class="t" style="left:50.3px;top:958.93px;font-size:15.8px;">Supervision</div>
<div class="t" style="left:373px;width:143px;text-align:right;top:958.93px;font-size:15.8px;color:#000;">0.00</div>
<div class="t" style="left:520.7px;width:142.6px;text-align:right;top:958.93px;font-size:15.8px;color:#7f7f7f;">8.00</div>
<div class="t" style="left:668px;width:142.5px;text-align:right;top:958.93px;font-size:15.8px;color:#7f7f7f;">14.00</div>
<div class="t" style="left:815.2px;width:142.2px;text-align:right;top:958.93px;font-size:15.8px;color:#7f7f7f;">20.00</div>
<div class="t" style="left:962.1px;width:142.6px;text-align:right;top:958.93px;font-size:15.8px;color:#000;">0.00</div>
<div class="t" style="left:1109.4px;width:134.7px;text-align:center;top:958.93px;font-size:15.8px;color:#000;">0.0%</div>
<div class="t" style="left:1244.1px;width:142.6px;text-align:right;top:958.93px;font-size:15.8px;color:#000;">0.00</div>
<div class="t" style="left:50.3px;top:981.33px;font-size:15.8px;">Company Overhead & Markup</div>
<div class="t" style="left:373px;width:143px;text-align:right;top:981.33px;font-size:15.8px;color:#000;">0.00</div>
<div class="t" style="left:520.7px;width:142.6px;text-align:right;top:981.33px;font-size:15.8px;color:#7f7f7f;">0.00</div>
<div class="t" style="left:668px;width:142.5px;text-align:right;top:981.33px;font-size:15.8px;color:#7f7f7f;">0.00</div>
<div class="t" style="left:815.2px;width:142.2px;text-align:right;top:981.33px;font-size:15.8px;color:#7f7f7f;">0.00</div>
<div class="t" style="left:962.1px;width:142.6px;text-align:right;top:981.33px;font-size:15.8px;color:#000;">0.00</div>
<div class="t" style="left:1109.4px;width:134.7px;text-align:center;top:981.33px;font-size:15.8px;color:#000;">0.0%</div>
<div class="t" style="left:1244.1px;width:142.6px;text-align:right;top:981.33px;font-size:15.8px;color:#000;">0.00</div>
<div class="t" style="left:50.3px;top:1004.14px;font-size:14.6px;font-weight:bold;">TOTAL</div>
<div class="t" style="left:373px;width:143px;text-align:right;top:1003.73px;font-size:15.8px;color:#000;">309,544.00</div>
<div class="t" style="left:520.7px;width:142.6px;text-align:right;top:1003.73px;font-size:15.8px;color:#7f7f7f;">308,395.00</div>
<div class="t" style="left:668px;width:142.5px;text-align:right;top:1003.73px;font-size:15.8px;color:#7f7f7f;">309,217.29</div>
<div class="t" style="left:815.2px;width:142.2px;text-align:right;top:1003.73px;font-size:15.8px;color:#7f7f7f;">319,481.71</div>
<div class="t" style="left:962.1px;width:142.6px;text-align:right;top:1003.73px;font-size:15.8px;color:#000;">310,795.20</div>
<div class="t" style="left:1244.1px;width:142.6px;text-align:right;top:1003.73px;font-size:15.8px;color:#000;">357,414.48</div>
<div class="t" style="left:49.8px;top:304.57px;color:#fff;font-weight:bold;font-size:22.6px;">SUMMARY</div>
<div class="t" style="left:171.7px;top:306.72px;color:#fff;font-weight:bold;font-size:16.4px;transform:scaleX(0.834);transform-origin:0 0;">OF PROJECT COSTS</div>
<div class="t" style="left:373px;width:147.7px;text-align:center;top:307.1px;font-size:15.3px;font-weight:bold;color:#fff;">Estimated</div>
<div class="t" style="left:520.7px;width:147.3px;text-align:center;top:307.1px;font-size:15.3px;font-weight:bold;color:#fff;">Firm</div>
<div class="t" style="left:668px;width:147.2px;text-align:center;top:307.1px;font-size:15.3px;font-weight:bold;color:#fff;">Bid</div>
<div class="t" style="left:815.2px;width:146.9px;text-align:center;top:307.1px;font-size:15.3px;font-weight:bold;color:#fff;">Actual</div>
<div class="t" style="left:962.1px;width:147.3px;text-align:center;top:305.4px;font-size:15.3px;font-weight:bold;color:#fff;">Cost (with tax)</div>
<div class="t" style="left:962.1px;width:147.3px;text-align:center;top:283.1px;font-size:15.3px;font-weight:bold;color:#fff;">Total Estimated</div>
<div class="t" style="left:1109.4px;width:134.7px;text-align:center;top:305.4px;font-size:15.3px;font-weight:bold;color:#fff;">% of Total</div>
<div class="t" style="left:1244.1px;width:147.3px;text-align:center;top:305.4px;font-size:15.3px;font-weight:bold;color:#fff;">Price</div>
<div class="t" style="left:1244.1px;width:147.3px;text-align:center;top:283.1px;font-size:15.3px;font-weight:bold;color:#fff;">Total Estimated</div>
<div class="t" style="left:49.9px;top:1048.47px;color:#fff;font-weight:bold;font-size:22.6px;transform:scaleX(0.901);transform-origin:0 0;">DETAILS</div>
<div class="t" style="left:144.1px;top:1050.62px;color:#fff;font-weight:bold;font-size:16.4px;transform:scaleX(0.834);transform-origin:0 0;">OF PROJECT COSTS</div>
<div class="t" style="left:373px;width:147.7px;text-align:center;top:1049.6px;font-size:15.3px;font-weight:bold;color:#fff;">Method</div>
<div class="t" style="left:520.7px;width:147.3px;text-align:center;top:1049.6px;font-size:15.3px;font-weight:bold;color:#fff;">Cost per unit</div>
<div class="t" style="left:668px;width:147.2px;text-align:center;top:1049.6px;font-size:15.3px;font-weight:bold;color:#fff;">unit</div>
<div class="t" style="left:815.2px;width:146.9px;text-align:center;top:1049.6px;font-size:15.3px;font-weight:bold;color:#fff;">Qty</div>
<div class="t" style="left:962.1px;width:147.3px;text-align:center;top:1049.6px;font-size:15.3px;font-weight:bold;color:#fff;">lump sum</div>
<div class="t" style="left:1109.4px;width:134.7px;text-align:center;top:1049.6px;font-size:15.3px;font-weight:bold;color:#fff;">Estimated</div>
<div class="t" style="left:1244.1px;width:147.3px;text-align:center;top:1049.6px;font-size:15.3px;font-weight:bold;color:#fff;">Firm</div>
<div class="t" style="left:1391.4px;width:129px;text-align:center;top:1049.6px;font-size:15.3px;font-weight:bold;color:#fff;">Bid</div>
<div class="t" style="left:1520.4px;width:130.3px;text-align:center;top:1049.6px;font-size:15.3px;font-weight:bold;color:#fff;">Actual</div>
<div class="t" style="left:1650.7px;width:129.1px;text-align:center;top:1049.6px;font-size:15.3px;font-weight:bold;color:#fff;">Estimated</div>
<div class="t" style="left:1650.7px;width:129.1px;text-align:center;top:1027.1px;font-size:15.3px;font-weight:bold;color:#fff;">Actual minus</div>
<div class="t" style="left:1779.8px;width:85.5px;text-align:center;top:1049.6px;font-size:15.3px;font-weight:bold;color:#fff;">Sales Tax</div>
<div class="t" style="left:1865.3px;width:134.3px;text-align:center;top:1049.6px;font-size:15.3px;font-weight:bold;color:#fff;">Cost</div>
<div class="t" style="left:1865.3px;width:134.3px;text-align:center;top:1027.1px;font-size:15.3px;font-weight:bold;color:#fff;">Total Estimated</div>
<div class="t" style="left:1999.6px;width:84.2px;text-align:center;top:1049.6px;font-size:15.3px;font-weight:bold;color:#fff;">(%)</div>
<div class="t" style="left:1999.6px;width:84.2px;text-align:center;top:1027.1px;font-size:15.3px;font-weight:bold;color:#fff;">Markup</div>
<div class="t" style="left:2083.8px;width:134.2px;text-align:center;top:1049.6px;font-size:15.3px;font-weight:bold;color:#fff;">Price</div>
<div class="t" style="left:2083.8px;width:134.2px;text-align:center;top:1027.1px;font-size:15.3px;font-weight:bold;color:#fff;">Total Estimated</div>
<div class="t" style="left:49.9px;top:1074.73px;color:#fff;font-weight:bold;font-size:15.8px;transform:scaleX(0.933);transform-origin:0 0;">PLANNING</div>
<div class="t" style="left:50.3px;top:1097.83px;font-size:15.8px;">Survey</div>
<div class="t" style="left:377.7px;top:1097.83px;font-size:15.8px;color:#3f3f76;">Lump Sum</div>
<div class="t" style="left:962.1px;width:142.6px;text-align:right;top:1097.83px;font-size:15.8px;color:#3f3f76;">400.00</div>
<div class="t" style="left:1109.4px;width:130px;text-align:right;top:1097.83px;font-size:15.8px;color:#000;">400.00</div>
<div class="t" style="left:1244.1px;width:142.6px;text-align:right;top:1097.83px;font-size:15.8px;color:#7f7f7f;">357.00</div>
<div class="t" style="left:1391.4px;width:124.3px;text-align:right;top:1097.83px;font-size:15.8px;color:#7f7f7f;">371.28</div>
<div class="t" style="left:1520.4px;width:125.6px;text-align:right;top:1097.83px;font-size:15.8px;color:#7f7f7f;">371.28</div>
<div class="t" style="left:1650.7px;width:124.4px;text-align:right;top:1097.83px;font-size:15.8px;color:#000;">-28.72</div>
<div class="t" style="left:1779.8px;width:80.8px;text-align:right;top:1097.83px;font-size:15.8px;color:#3f3f76;">8%</div>
<div class="t" style="left:1865.3px;width:129.6px;text-align:right;top:1097.83px;font-size:15.8px;color:#000;">432.00</div>
<div class="t" style="left:1999.6px;width:84.2px;text-align:center;top:1097.83px;font-size:15.8px;color:#3f3f76;">15%</div>
<div class="t" style="left:2083.8px;width:129.5px;text-align:right;top:1097.83px;font-size:15.8px;color:#000;">496.80</div>
<div class="t" style="left:50.3px;top:1121.87px;font-size:15.8px;">Design Services</div>
<div class="t" style="left:377.7px;top:1121.87px;font-size:15.8px;color:#3f3f76;">Lump Sum</div>
<div class="t" style="left:962.1px;width:142.6px;text-align:right;top:1121.87px;font-size:15.8px;color:#3f3f76;">7,000.00</div>
<div class="t" style="left:1109.4px;width:130px;text-align:right;top:1121.87px;font-size:15.8px;color:#000;">7,000.00</div>
<div class="t" style="left:1244.1px;width:142.6px;text-align:right;top:1121.87px;font-size:15.8px;color:#7f7f7f;">6,200.00</div>
<div class="t" style="left:1391.4px;width:124.3px;text-align:right;top:1121.87px;font-size:15.8px;color:#7f7f7f;">6,200.00</div>
<div class="t" style="left:1520.4px;width:125.6px;text-align:right;top:1121.87px;font-size:15.8px;color:#7f7f7f;">5,952.00</div>
<div class="t" style="left:1650.7px;width:124.4px;text-align:right;top:1121.87px;font-size:15.8px;color:#000;">-1,048.00</div>
<div class="t" style="left:1779.8px;width:80.8px;text-align:right;top:1121.87px;font-size:15.8px;color:#3f3f76;">8%</div>
<div class="t" style="left:1865.3px;width:129.6px;text-align:right;top:1121.87px;font-size:15.8px;color:#000;">7,560.00</div>
<div class="t" style="left:1999.6px;width:84.2px;text-align:center;top:1121.87px;font-size:15.8px;color:#3f3f76;">15%</div>
<div class="t" style="left:2083.8px;width:129.5px;text-align:right;top:1121.87px;font-size:15.8px;color:#000;">8,694.00</div>
<div class="t" style="left:50.3px;top:1145.91px;font-size:15.8px;">Permits</div>
<div class="t" style="left:138px;top:1169.95px;font-size:15.8px;">Building Permit</div>
<div class="t" style="left:377.7px;top:1169.95px;font-size:15.8px;color:#3f3f76;">Lump Sum</div>
<div class="t" style="left:962.1px;width:142.6px;text-align:right;top:1169.95px;font-size:15.8px;color:#3f3f76;">600.00</div>
<div class="t" style="left:1109.4px;width:130px;text-align:right;top:1169.95px;font-size:15.8px;color:#000;">600.00</div>
<div class="t" style="left:1244.1px;width:142.6px;text-align:right;top:1169.95px;font-size:15.8px;color:#7f7f7f;">600.00</div>
<div class="t" style="left:1391.4px;width:124.3px;text-align:right;top:1169.95px;font-size:15.8px;color:#7f7f7f;">600.00</div>
<div class="t" style="left:1520.4px;width:125.6px;text-align:right;top:1169.95px;font-size:15.8px;color:#7f7f7f;">612.00</div>
<div class="t" style="left:1650.7px;width:124.4px;text-align:right;top:1169.95px;font-size:15.8px;color:#000;">12.00</div>
<div class="t" style="left:1865.3px;width:129.6px;text-align:right;top:1169.95px;font-size:15.8px;color:#000;">600.00</div>
<div class="t" style="left:1999.6px;width:84.2px;text-align:center;top:1169.95px;font-size:15.8px;color:#3f3f76;">15%</div>
<div class="t" style="left:2083.8px;width:129.5px;text-align:right;top:1169.95px;font-size:15.8px;color:#000;">690.00</div>
<div class="t" style="left:138px;top:1193.99px;font-size:15.8px;">Mechanical Permit</div>
<div class="t" style="left:377.7px;top:1193.99px;font-size:15.8px;color:#3f3f76;">Lump Sum</div>
<div class="t" style="left:962.1px;width:142.6px;text-align:right;top:1193.99px;font-size:15.8px;color:#3f3f76;">250.00</div>
<div class="t" style="left:1109.4px;width:130px;text-align:right;top:1193.99px;font-size:15.8px;color:#000;">250.00</div>
<div class="t" style="left:1244.1px;width:142.6px;text-align:right;top:1193.99px;font-size:15.8px;color:#7f7f7f;">250.00</div>
<div class="t" style="left:1391.4px;width:124.3px;text-align:right;top:1193.99px;font-size:15.8px;color:#7f7f7f;">250.00</div>
<div class="t" style="left:1520.4px;width:125.6px;text-align:right;top:1193.99px;font-size:15.8px;color:#7f7f7f;">256.00</div>
<div class="t" style="left:1650.7px;width:124.4px;text-align:right;top:1193.99px;font-size:15.8px;color:#000;">6.00</div>
<div class="t" style="left:1865.3px;width:129.6px;text-align:right;top:1193.99px;font-size:15.8px;color:#000;">250.00</div>
<div class="t" style="left:1999.6px;width:84.2px;text-align:center;top:1193.99px;font-size:15.8px;color:#3f3f76;">15%</div>
<div class="t" style="left:2083.8px;width:129.5px;text-align:right;top:1193.99px;font-size:15.8px;color:#000;">287.50</div>
<div class="t" style="left:138px;top:1218.03px;font-size:15.8px;">Electrical Permit</div>
<div class="t" style="left:377.7px;top:1218.03px;font-size:15.8px;color:#3f3f76;">Lump Sum</div>
<div class="t" style="left:962.1px;width:142.6px;text-align:right;top:1218.03px;font-size:15.8px;color:#3f3f76;">300.00</div>
<div class="t" style="left:1109.4px;width:130px;text-align:right;top:1218.03px;font-size:15.8px;color:#000;">300.00</div>
<div class="t" style="left:1244.1px;width:142.6px;text-align:right;top:1218.03px;font-size:15.8px;color:#7f7f7f;">300.00</div>
<div class="t" style="left:1391.4px;width:124.3px;text-align:right;top:1218.03px;font-size:15.8px;color:#7f7f7f;">300.00</div>
<div class="t" style="left:1520.4px;width:125.6px;text-align:right;top:1218.03px;font-size:15.8px;color:#7f7f7f;">300.00</div>
<div class="t" style="left:1650.7px;width:124.4px;text-align:right;top:1218.03px;font-size:15.8px;color:#000;">0.00</div>
<div class="t" style="left:1865.3px;width:129.6px;text-align:right;top:1218.03px;font-size:15.8px;color:#000;">300.00</div>
<div class="t" style="left:1999.6px;width:84.2px;text-align:center;top:1218.03px;font-size:15.8px;color:#3f3f76;">15%</div>
<div class="t" style="left:2083.8px;width:129.5px;text-align:right;top:1218.03px;font-size:15.8px;color:#000;">345.00</div>
<div class="t" style="left:138px;top:1242.07px;font-size:15.8px;">Plumbing Permit</div>
<div class="t" style="left:377.7px;top:1242.07px;font-size:15.8px;color:#3f3f76;">Lump Sum</div>
<div class="t" style="left:962.1px;width:142.6px;text-align:right;top:1242.07px;font-size:15.8px;color:#3f3f76;">170.00</div>
<div class="t" style="left:1109.4px;width:130px;text-align:right;top:1242.07px;font-size:15.8px;color:#000;">170.00</div>
<div class="t" style="left:1244.1px;width:142.6px;text-align:right;top:1242.07px;font-size:15.8px;color:#7f7f7f;">170.00</div>
<div class="t" style="left:1391.4px;width:124.3px;text-align:right;top:1242.07px;font-size:15.8px;color:#7f7f7f;">170.00</div>
<div class="t" style="left:1520.4px;width:125.6px;text-align:right;top:1242.07px;font-size:15.8px;color:#7f7f7f;">170.00</div>
<div class="t" style="left:1650.7px;width:124.4px;text-align:right;top:1242.07px;font-size:15.8px;color:#000;">0.00</div>
<div class="t" style="left:1865.3px;width:129.6px;text-align:right;top:1242.07px;font-size:15.8px;color:#000;">170.00</div>
<div class="t" style="left:1999.6px;width:84.2px;text-align:center;top:1242.07px;font-size:15.8px;color:#3f3f76;">15%</div>
<div class="t" style="left:2083.8px;width:129.5px;text-align:right;top:1242.07px;font-size:15.8px;color:#000;">195.50</div>
<div class="t" style="left:138px;top:1266.11px;font-size:15.8px;">Sidewalk/Driveway Permit</div>
<div class="t" style="left:377.7px;top:1266.11px;font-size:15.8px;color:#3f3f76;">Lump Sum</div>
<div class="t" style="left:962.1px;width:142.6px;text-align:right;top:1266.11px;font-size:15.8px;color:#3f3f76;">70.00</div>
<div class="t" style="left:1109.4px;width:130px;text-align:right;top:1266.11px;font-size:15.8px;color:#000;">70.00</div>
<div class="t" style="left:1244.1px;width:142.6px;text-align:right;top:1266.11px;font-size:15.8px;color:#7f7f7f;">70.00</div>
<div class="t" style="left:1391.4px;width:124.3px;text-align:right;top:1266.11px;font-size:15.8px;color:#7f7f7f;">70.00</div>
<div class="t" style="left:1520.4px;width:125.6px;text-align:right;top:1266.11px;font-size:15.8px;color:#7f7f7f;">70.00</div>
<div class="t" style="left:1650.7px;width:124.4px;text-align:right;top:1266.11px;font-size:15.8px;color:#000;">0.00</div>
<div class="t" style="left:1865.3px;width:129.6px;text-align:right;top:1266.11px;font-size:15.8px;color:#000;">70.00</div>
<div class="t" style="left:1999.6px;width:84.2px;text-align:center;top:1266.11px;font-size:15.8px;color:#3f3f76;">15%</div>
<div class="t" style="left:2083.8px;width:129.5px;text-align:right;top:1266.11px;font-size:15.8px;color:#000;">80.50</div>
<div class="t" style="left:138px;top:1290.15px;font-size:15.8px;">Zoning Permit</div>
<div class="t" style="left:377.7px;top:1290.15px;font-size:15.8px;color:#3f3f76;">Lump Sum</div>
<div class="t" style="left:1109.4px;width:130px;text-align:right;top:1290.15px;font-size:15.8px;color:#000;">0.00</div>
<div class="t" style="left:1865.3px;width:129.6px;text-align:right;top:1290.15px;font-size:15.8px;color:#000;">0.00</div>
<div class="t" style="left:1999.6px;width:84.2px;text-align:center;top:1290.15px;font-size:15.8px;color:#3f3f76;">15%</div>
<div class="t" style="left:2083.8px;width:129.5px;text-align:right;top:1290.15px;font-size:15.8px;color:#000;">0.00</div>
<div class="t" style="left:138px;top:1314.19px;font-size:15.8px;">Inspection Fees</div>
<div class="t" style="left:377.7px;top:1314.19px;font-size:15.8px;color:#3f3f76;">Lump Sum</div>
<div class="t" style="left:1109.4px;width:130px;text-align:right;top:1314.19px;font-size:15.8px;color:#000;">0.00</div>
<div class="t" style="left:1865.3px;width:129.6px;text-align:right;top:1314.19px;font-size:15.8px;color:#000;">0.00</div>
<div class="t" style="left:1999.6px;width:84.2px;text-align:center;top:1314.19px;font-size:15.8px;color:#3f3f76;">15%</div>
<div class="t" style="left:2083.8px;width:129.5px;text-align:right;top:1314.19px;font-size:15.8px;color:#000;">0.00</div>
<div class="t" style="left:138px;top:1338.23px;font-size:15.8px;">Impact Fees</div>
<div class="t" style="left:377.7px;top:1338.23px;font-size:15.8px;color:#3f3f76;">Lump Sum</div>
<div class="t" style="left:1109.4px;width:130px;text-align:right;top:1338.23px;font-size:15.8px;color:#000;">0.00</div>
<div class="t" style="left:1865.3px;width:129.6px;text-align:right;top:1338.23px;font-size:15.8px;color:#000;">0.00</div>
<div class="t" style="left:1999.6px;width:84.2px;text-align:center;top:1338.23px;font-size:15.8px;color:#3f3f76;">15%</div>
<div class="t" style="left:2083.8px;width:129.5px;text-align:right;top:1338.23px;font-size:15.8px;color:#000;">0.00</div>
<div class="t" style="left:138px;top:1362.27px;font-size:15.8px;">Other</div>
<div class="t" style="left:377.7px;top:1362.27px;font-size:15.8px;color:#3f3f76;">Lump Sum</div>
<div class="t" style="left:1109.4px;width:130px;text-align:right;top:1362.27px;font-size:15.8px;color:#000;">0.00</div>
<div class="t" style="left:1865.3px;width:129.6px;text-align:right;top:1362.27px;font-size:15.8px;color:#000;">0.00</div>
<div class="t" style="left:1999.6px;width:84.2px;text-align:center;top:1362.27px;font-size:15.8px;color:#3f3f76;">15%</div>
<div class="t" style="left:2083.8px;width:129.5px;text-align:right;top:1362.27px;font-size:15.8px;color:#000;">0.00</div>
</div>
<div style="left:1520.4px;top:256.8px;width:563.8px;height:186px;background:#ffffcc;border:1.6px solid #b4b4a0;"></div>
<div class="t" style="left:1524.4px;top:257.32px;font-size:16.1px;"><b style="text-decoration:underline;display:inline-block;transform:scaleX(0.93);transform-origin:0 0">Instructions:</b></div>
<div class="t" style="left:1524.4px;top:279.72px;font-size:16.1px;">Orange cells are inputs. Fill them in and a cost summary will be in the table</div>
<div class="t" style="left:1524.4px;top:302.12px;font-size:16.1px;">to the left.</div>
<div class="t" style="left:1524.4px;top:324.52px;font-size:16.1px;">Cost summary results are presented in pie chart format as well on the</div>
<div class="t" style="left:1524.4px;top:346.92px;font-size:16.1px;">"Cost_Pie-Chart" tab.</div>
<div class="t" style="left:1524.4px;top:369.32px;font-size:16.1px;">Choose the Cost Basis (i.e. estimated, bid, etc.), and the required input cells</div>
<div class="t" style="left:1524.4px;top:391.72px;font-size:16.1px;">will adjust accordingly.</div>
<div style="left:1520.4px;top:464.2px;width:130.3px;height:23px;background:#ffcc99;border:2.6px solid #1f55d6;border-top-width:3px;"></div>
<div style="left:1646px;top:484.2px;width:7px;height:4px;background:#6a9ae8;border:1px solid #f4f4f4;"></div>
<div class="t" style="left:1520.4px;width:130.3px;text-align:center;top:465.53px;font-size:15.2px;color:#3f3f76;">Estimated</div>
<div style="left:1652.5px;top:464.8px;width:24.5px;height:22.4px;background:#a9a9a9;"></div>
<svg style="left:1652.5px;top:464.8px" width="24.5" height="22.4"><path d="M7 9.5 L12.25 4 L17.5 9.5Z M7 13 L12.25 18.5 L17.5 13Z" fill="#111"/></svg>
<div class="t" style="left:1676.8px;top:465.5px;font-size:15.3px;font-weight:bold;transform:scaleX(0.9);transform-origin:0 0;">Costs Basis</div>
<div class="t" style="left:1868px;top:465.33px;font-size:15.2px;color:#e4ebd8;">SUMMARY OF PROJECT COSTS (Estimated)</div>
<div style="left:1518.7px;top:487.5px;width:148.3px;height:113.5px;background:#f4f4f4;border-radius:5px 5px 8px 8px;box-shadow:0 2px 5px rgba(0,0,0,0.3);"></div>
<div class="t" style="left:1552.4px;top:499.09px;font-size:18.5px;color:#111;">Estimated</div>
<div class="t" style="left:1552.4px;top:523.09px;font-size:18.5px;color:#111;">Firm</div>
<div class="t" style="left:1552.4px;top:547.09px;font-size:18.5px;color:#111;">Bid</div>
<div class="t" style="left:1552.4px;top:571.09px;font-size:18.5px;color:#111;">Actual</div>
<svg style="left:1522px;top:502px" width="16" height="14"><path d="M2 7.5 L6 11.5 L13 2.5" stroke="#222" stroke-width="1.6" fill="none"/></svg>
<div style="left:0px;top:230px;width:2304px;height:6.5px;background:#ebebeb;border-top:1.2px solid #b4b4b4;border-bottom:1.4px solid #a9a9a9;"></div>
<div style="left:0px;top:236px;width:2279px;height:20.8px;background:linear-gradient(#f3f3f3,#e2e2e2);border-bottom:1.6px solid #9d9d9d;"></div>
<div style="left:0px;top:236px;width:45.6px;height:20.8px;background:linear-gradient(#f3f3f3,#e2e2e2);border-right:1.6px solid #a0a0a0;border-bottom:1.6px solid #9d9d9d;"></div>
<svg style="left:26px;top:240px" width="18" height="15"><path d="M1 14 L16 14 L16 1Z" fill="#fff" stroke="#bdbdbd" stroke-width="1"/></svg>
<div style="left:132.5px;top:236px;width:1.6px;height:20.8px;background:#a8a8a8;"></div>
<div class="t" style="left:45.6px;width:87.7px;top:236.03px;text-align:center;font-size:17.8px;font-weight:bold;color:#666;text-shadow:0 1px 0 #fff;">A</div>
<div style="left:372.2px;top:236px;width:1.6px;height:20.8px;background:#a8a8a8;"></div>
<div class="t" style="left:133.3px;width:239.7px;top:236.03px;text-align:center;font-size:17.8px;font-weight:bold;color:#666;text-shadow:0 1px 0 #fff;">B</div>
<div style="left:519.9px;top:236px;width:1.6px;height:20.8px;background:#a8a8a8;"></div>
<div class="t" style="left:373px;width:147.7px;top:236.03px;text-align:center;font-size:17.8px;font-weight:bold;color:#666;text-shadow:0 1px 0 #fff;">C</div>
<div style="left:667.2px;top:236px;width:1.6px;height:20.8px;background:#a8a8a8;"></div>
<div class="t" style="left:520.7px;width:147.3px;top:236.03px;text-align:center;font-size:17.8px;font-weight:bold;color:#666;text-shadow:0 1px 0 #fff;">D</div>
<div style="left:814.4px;top:236px;width:1.6px;height:20.8px;background:#a8a8a8;"></div>
<div class="t" style="left:668px;width:147.2px;top:236.03px;text-align:center;font-size:17.8px;font-weight:bold;color:#666;text-shadow:0 1px 0 #fff;">E</div>
<div style="left:961.3px;top:236px;width:1.6px;height:20.8px;background:#a8a8a8;"></div>
<div class="t" style="left:815.2px;width:146.9px;top:236.03px;text-align:center;font-size:17.8px;font-weight:bold;color:#666;text-shadow:0 1px 0 #fff;">F</div>
<div style="left:1108.6px;top:236px;width:1.6px;height:20.8px;background:#a8a8a8;"></div>
<div class="t" style="left:962.1px;width:147.3px;top:236.03px;text-align:center;font-size:17.8px;font-weight:bold;color:#666;text-shadow:0 1px 0 #fff;">G</div>
<div style="left:1243.3px;top:236px;width:1.6px;height:20.8px;background:#a8a8a8;"></div>
<div class="t" style="left:1109.4px;width:134.7px;top:236.03px;text-align:center;font-size:17.8px;font-weight:bold;color:#666;text-shadow:0 1px 0 #fff;">H</div>
<div style="left:1390.6px;top:236px;width:1.6px;height:20.8px;background:#a8a8a8;"></div>
<div class="t" style="left:1244.1px;width:147.3px;top:236.03px;text-align:center;font-size:17.8px;font-weight:bold;color:#666;text-shadow:0 1px 0 #fff;">I</div>
<div style="left:1519.6px;top:236px;width:1.6px;height:20.8px;background:#a8a8a8;"></div>
<div class="t" style="left:1391.4px;width:129px;top:236.03px;text-align:center;font-size:17.8px;font-weight:bold;color:#666;text-shadow:0 1px 0 #fff;">J</div>
<div style="left:1519.6px;top:236.5px;width:131.9px;height:20.3px;background:linear-gradient(#c4c4c4,#9c9c9c);border:1.2px solid #7a7a7a;border-top:none;"></div>
<div style="left:1649.9px;top:236px;width:1.6px;height:20.8px;background:#a8a8a8;"></div>
<div class="t" style="left:1520.4px;width:130.3px;top:236.03px;text-align:center;font-size:17.8px;font-weight:bold;color:#fff;text-shadow:0 1px 0 #555;">K</div>
<div style="left:1779px;top:236px;width:1.6px;height:20.8px;background:#a8a8a8;"></div>
<div class="t" style="left:1650.7px;width:129.1px;top:236.03px;text-align:center;font-size:17.8px;font-weight:bold;color:#666;text-shadow:0 1px 0 #fff;">L</div>
<div style="left:1864.5px;top:236px;width:1.6px;height:20.8px;background:#a8a8a8;"></div>
<div class="t" style="left:1779.8px;width:85.5px;top:236.03px;text-align:center;font-size:17.8px;font-weight:bold;color:#666;text-shadow:0 1px 0 #fff;">M</div>
<div style="left:1998.8px;top:236px;width:1.6px;height:20.8px;background:#a8a8a8;"></div>
<div class="t" style="left:1865.3px;width:134.3px;top:236.03px;text-align:center;font-size:17.8px;font-weight:bold;color:#666;text-shadow:0 1px 0 #fff;">N</div>
<div style="left:2083px;top:236px;width:1.6px;height:20.8px;background:#a8a8a8;"></div>
<div class="t" style="left:1999.6px;width:84.2px;top:236.03px;text-align:center;font-size:17.8px;font-weight:bold;color:#666;text-shadow:0 1px 0 #fff;">O</div>
<div style="left:2217.2px;top:236px;width:1.6px;height:20.8px;background:#a8a8a8;"></div>
<div class="t" style="left:2083.8px;width:134.2px;top:236.03px;text-align:center;font-size:17.8px;font-weight:bold;color:#666;text-shadow:0 1px 0 #fff;">P</div>
<div style="left:2278.2px;top:236px;width:1.6px;height:20.8px;background:#a8a8a8;"></div>
<div class="t" style="left:2218px;width:87px;top:236.03px;text-align:center;font-size:17.8px;font-weight:bold;color:#666;text-shadow:0 1px 0 #fff;">Q</div>
<div style="left:0px;top:256.8px;width:45.6px;height:1127.2px;background:#dcdcdc;border-right:1.6px solid #a0a0a0;"></div>
<div style="left:0px;top:329.6px;width:45.6px;height:1.6px;background:#a5a5a5;"></div>
<div style="left:0px;top:331.2px;width:44px;height:1.2px;background:#ebebeb;"></div>
<div class="t" style="left:0;width:42px;text-align:center;top:307.16px;font-size:18px;font-weight:bold;color:#6a6a6a;text-shadow:0 1px 0 #f4f4f4;">1</div>
<div style="left:0px;top:352px;width:45.6px;height:1.6px;background:#a5a5a5;"></div>
<div style="left:0px;top:353.6px;width:44px;height:1.2px;background:#ebebeb;"></div>
<div class="t" style="left:0;width:42px;text-align:center;top:330.56px;font-size:18px;font-weight:bold;color:#6a6a6a;text-shadow:0 1px 0 #f4f4f4;">2</div>
<div style="left:0px;top:374.4px;width:45.6px;height:1.6px;background:#a5a5a5;"></div>
<div style="left:0px;top:376px;width:44px;height:1.2px;background:#ebebeb;"></div>
<div class="t" style="left:0;width:42px;text-align:center;top:352.96px;font-size:18px;font-weight:bold;color:#6a6a6a;text-shadow:0 1px 0 #f4f4f4;">3</div>
<div style="left:0px;top:396.8px;width:45.6px;height:1.6px;background:#a5a5a5;"></div>
<div style="left:0px;top:398.4px;width:44px;height:1.2px;background:#ebebeb;"></div>
<div class="t" style="left:0;width:42px;text-align:center;top:375.36px;font-size:18px;font-weight:bold;color:#6a6a6a;text-shadow:0 1px 0 #f4f4f4;">4</div>
<div style="left:0px;top:419.2px;width:45.6px;height:1.6px;background:#a5a5a5;"></div>
<div style="left:0px;top:420.8px;width:44px;height:1.2px;background:#ebebeb;"></div>
<div class="t" style="left:0;width:42px;text-align:center;top:397.76px;font-size:18px;font-weight:bold;color:#6a6a6a;text-shadow:0 1px 0 #f4f4f4;">5</div>
<div style="left:0px;top:441.6px;width:45.6px;height:1.6px;background:#a5a5a5;"></div>
<div style="left:0px;top:443.2px;width:44px;height:1.2px;background:#ebebeb;"></div>
<div class="t" style="left:0;width:42px;text-align:center;top:420.16px;font-size:18px;font-weight:bold;color:#6a6a6a;text-shadow:0 1px 0 #f4f4f4;">6</div>
<div style="left:0px;top:464px;width:45.6px;height:1.6px;background:#a5a5a5;"></div>
<div style="left:0px;top:465.6px;width:44px;height:1.2px;background:#ebebeb;"></div>
<div class="t" style="left:0;width:42px;text-align:center;top:442.56px;font-size:18px;font-weight:bold;color:#6a6a6a;text-shadow:0 1px 0 #f4f4f4;">7</div>
<div style="left:0px;top:464.8px;width:45.6px;height:22.4px;background:#a0a0a0;"></div>
<div style="left:0px;top:486.4px;width:45.6px;height:1.6px;background:#a5a5a5;"></div>
<div style="left:0px;top:488px;width:44px;height:1.2px;background:#ebebeb;"></div>
<div class="t" style="left:0;width:42px;text-align:center;top:464.96px;font-size:18px;font-weight:bold;color:#fff;text-shadow:0 1px 0 #777;">8</div>
<div style="left:0px;top:508.8px;width:45.6px;height:1.6px;background:#a5a5a5;"></div>
<div style="left:0px;top:510.4px;width:44px;height:1.2px;background:#ebebeb;"></div>
<div class="t" style="left:0;width:42px;text-align:center;top:487.36px;font-size:18px;font-weight:bold;color:#6a6a6a;text-shadow:0 1px 0 #f4f4f4;">9</div>
<div style="left:0px;top:531.2px;width:45.6px;height:1.6px;background:#a5a5a5;"></div>
<div style="left:0px;top:532.8px;width:44px;height:1.2px;background:#ebebeb;"></div>
<div class="t" style="left:0;width:42px;text-align:center;top:509.76px;font-size:18px;font-weight:bold;color:#6a6a6a;text-shadow:0 1px 0 #f4f4f4;">10</div>
<div style="left:0px;top:553.6px;width:45.6px;height:1.6px;background:#a5a5a5;"></div>
<div style="left:0px;top:555.2px;width:44px;height:1.2px;background:#ebebeb;"></div>
<div class="t" style="left:0;width:42px;text-align:center;top:532.16px;font-size:18px;font-weight:bold;color:#6a6a6a;text-shadow:0 1px 0 #f4f4f4;">11</div>
<div style="left:0px;top:576px;width:45.6px;height:1.6px;background:#a5a5a5;"></div>
<div style="left:0px;top:577.6px;width:44px;height:1.2px;background:#ebebeb;"></div>
<div class="t" style="left:0;width:42px;text-align:center;top:554.56px;font-size:18px;font-weight:bold;color:#6a6a6a;text-shadow:0 1px 0 #f4f4f4;">12</div>
<div style="left:0px;top:598.4px;width:45.6px;height:1.6px;background:#a5a5a5;"></div>
<div style="left:0px;top:600px;width:44px;height:1.2px;background:#ebebeb;"></div>
<div class="t" style="left:0;width:42px;text-align:center;top:576.96px;font-size:18px;font-weight:bold;color:#6a6a6a;text-shadow:0 1px 0 #f4f4f4;">13</div>
<div style="left:0px;top:620.8px;width:45.6px;height:1.6px;background:#a5a5a5;"></div>
<div style="left:0px;top:622.4px;width:44px;height:1.2px;background:#ebebeb;"></div>
<div class="t" style="left:0;width:42px;text-align:center;top:599.36px;font-size:18px;font-weight:bold;color:#6a6a6a;text-shadow:0 1px 0 #f4f4f4;">14</div>
<div style="left:0px;top:643.2px;width:45.6px;height:1.6px;background:#a5a5a5;"></div>
<div style="left:0px;top:644.8px;width:44px;height:1.2px;background:#ebebeb;"></div>
<div class="t" style="left:0;width:42px;text-align:center;top:621.76px;font-size:18px;font-weight:bold;color:#6a6a6a;text-shadow:0 1px 0 #f4f4f4;">15</div>
<div style="left:0px;top:665.6px;width:45.6px;height:1.6px;background:#a5a5a5;"></div>
<div style="left:0px;top:667.2px;width:44px;height:1.2px;background:#ebebeb;"></div>
<div class="t" style="left:0;width:42px;text-align:center;top:644.16px;font-size:18px;font-weight:bold;color:#6a6a6a;text-shadow:0 1px 0 #f4f4f4;">16</div>
<div style="left:0px;top:688px;width:45.6px;height:1.6px;background:#a5a5a5;"></div>
<div style="left:0px;top:689.6px;width:44px;height:1.2px;background:#ebebeb;"></div>
<div class="t" style="left:0;width:42px;text-align:center;top:666.56px;font-size:18px;font-weight:bold;color:#6a6a6a;text-shadow:0 1px 0 #f4f4f4;">17</div>
<div style="left:0px;top:710.4px;width:45.6px;height:1.6px;background:#a5a5a5;"></div>
<div style="left:0px;top:712px;width:44px;height:1.2px;background:#ebebeb;"></div>
<div class="t" style="left:0;width:42px;text-align:center;top:688.96px;font-size:18px;font-weight:bold;color:#6a6a6a;text-shadow:0 1px 0 #f4f4f4;">18</div>
<div style="left:0px;top:732.8px;width:45.6px;height:1.6px;background:#a5a5a5;"></div>
<div style="left:0px;top:734.4px;width:44px;height:1.2px;background:#ebebeb;"></div>
<div class="t" style="left:0;width:42px;text-align:center;top:711.36px;font-size:18px;font-weight:bold;color:#6a6a6a;text-shadow:0 1px 0 #f4f4f4;">19</div>
<div style="left:0px;top:755.2px;width:45.6px;height:1.6px;background:#a5a5a5;"></div>
<div style="left:0px;top:756.8px;width:44px;height:1.2px;background:#ebebeb;"></div>
<div class="t" style="left:0;width:42px;text-align:center;top:733.76px;font-size:18px;font-weight:bold;color:#6a6a6a;text-shadow:0 1px 0 #f4f4f4;">20</div>
<div style="left:0px;top:777.6px;width:45.6px;height:1.6px;background:#a5a5a5;"></div>
<div style="left:0px;top:779.2px;width:44px;height:1.2px;background:#ebebeb;"></div>
<div class="t" style="left:0;width:42px;text-align:center;top:756.16px;font-size:18px;font-weight:bold;color:#6a6a6a;text-shadow:0 1px 0 #f4f4f4;">21</div>
<div style="left:0px;top:800px;width:45.6px;height:1.6px;background:#a5a5a5;"></div>
<div style="left:0px;top:801.6px;width:44px;height:1.2px;background:#ebebeb;"></div>
<div class="t" style="left:0;width:42px;text-align:center;top:778.56px;font-size:18px;font-weight:bold;color:#6a6a6a;text-shadow:0 1px 0 #f4f4f4;">22</div>
<div style="left:0px;top:822.4px;width:45.6px;height:1.6px;background:#a5a5a5;"></div>
<div style="left:0px;top:824px;width:44px;height:1.2px;background:#ebebeb;"></div>
<div class="t" style="left:0;width:42px;text-align:center;top:800.96px;font-size:18px;font-weight:bold;color:#6a6a6a;text-shadow:0 1px 0 #f4f4f4;">23</div>
<div style="left:0px;top:844.8px;width:45.6px;height:1.6px;background:#a5a5a5;"></div>
<div style="left:0px;top:846.4px;width:44px;height:1.2px;background:#ebebeb;"></div>
<div class="t" style="left:0;width:42px;text-align:center;top:823.36px;font-size:18px;font-weight:bold;color:#6a6a6a;text-shadow:0 1px 0 #f4f4f4;">24</div>
<div style="left:0px;top:867.2px;width:45.6px;height:1.6px;background:#a5a5a5;"></div>
<div style="left:0px;top:868.8px;width:44px;height:1.2px;background:#ebebeb;"></div>
<div class="t" style="left:0;width:42px;text-align:center;top:845.76px;font-size:18px;font-weight:bold;color:#6a6a6a;text-shadow:0 1px 0 #f4f4f4;">25</div>
<div style="left:0px;top:889.6px;width:45.6px;height:1.6px;background:#a5a5a5;"></div>
<div style="left:0px;top:891.2px;width:44px;height:1.2px;background:#ebebeb;"></div>
<div class="t" style="left:0;width:42px;text-align:center;top:868.16px;font-size:18px;font-weight:bold;color:#6a6a6a;text-shadow:0 1px 0 #f4f4f4;">26</div>
<div style="left:0px;top:912px;width:45.6px;height:1.6px;background:#a5a5a5;"></div>
<div style="left:0px;top:913.6px;width:44px;height:1.2px;background:#ebebeb;"></div>
<div class="t" style="left:0;width:42px;text-align:center;top:890.56px;font-size:18px;font-weight:bold;color:#6a6a6a;text-shadow:0 1px 0 #f4f4f4;">27</div>
<div style="left:0px;top:934.4px;width:45.6px;height:1.6px;background:#a5a5a5;"></div>
<div style="left:0px;top:936px;width:44px;height:1.2px;background:#ebebeb;"></div>
<div class="t" style="left:0;width:42px;text-align:center;top:912.96px;font-size:18px;font-weight:bold;color:#6a6a6a;text-shadow:0 1px 0 #f4f4f4;">28</div>
<div style="left:0px;top:956.8px;width:45.6px;height:1.6px;background:#a5a5a5;"></div>
<div style="left:0px;top:958.4px;width:44px;height:1.2px;background:#ebebeb;"></div>
<div class="t" style="left:0;width:42px;text-align:center;top:935.36px;font-size:18px;font-weight:bold;color:#6a6a6a;text-shadow:0 1px 0 #f4f4f4;">29</div>
<div style="left:0px;top:979.2px;width:45.6px;height:1.6px;background:#a5a5a5;"></div>
<div style="left:0px;top:980.8px;width:44px;height:1.2px;background:#ebebeb;"></div>
<div class="t" style="left:0;width:42px;text-align:center;top:957.76px;font-size:18px;font-weight:bold;color:#6a6a6a;text-shadow:0 1px 0 #f4f4f4;">30</div>
<div style="left:0px;top:1001.6px;width:45.6px;height:1.6px;background:#a5a5a5;"></div>
<div style="left:0px;top:1003.2px;width:44px;height:1.2px;background:#ebebeb;"></div>
<div class="t" style="left:0;width:42px;text-align:center;top:980.16px;font-size:18px;font-weight:bold;color:#6a6a6a;text-shadow:0 1px 0 #f4f4f4;">31</div>
<div style="left:0px;top:1024px;width:45.6px;height:1.6px;background:#a5a5a5;"></div>
<div style="left:0px;top:1025.6px;width:44px;height:1.2px;background:#ebebeb;"></div>
<div class="t" style="left:0;width:42px;text-align:center;top:1002.56px;font-size:18px;font-weight:bold;color:#6a6a6a;text-shadow:0 1px 0 #f4f4f4;">32</div>
<div style="left:0px;top:1074.1px;width:45.6px;height:1.6px;background:#a5a5a5;"></div>
<div style="left:0px;top:1075.7px;width:44px;height:1.2px;background:#ebebeb;"></div>
<div class="t" style="left:0;width:42px;text-align:center;top:1050.36px;font-size:18px;font-weight:bold;color:#6a6a6a;text-shadow:0 1px 0 #f4f4f4;">33</div>
<div style="left:0px;top:1095.5px;width:45.6px;height:1.6px;background:#a5a5a5;"></div>
<div style="left:0px;top:1097.1px;width:44px;height:1.2px;background:#ebebeb;"></div>
<div class="t" style="left:0;width:42px;text-align:center;top:1074.46px;font-size:18px;font-weight:bold;color:#6a6a6a;text-shadow:0 1px 0 #f4f4f4;">34</div>
<div style="left:0px;top:1118.1px;width:45.6px;height:1.6px;background:#a5a5a5;"></div>
<div style="left:0px;top:1119.7px;width:44px;height:1.2px;background:#ebebeb;"></div>
<div class="t" style="left:0;width:42px;text-align:center;top:1096.66px;font-size:18px;font-weight:bold;color:#6a6a6a;text-shadow:0 1px 0 #f4f4f4;">35</div>
<div style="left:0px;top:1142.14px;width:45.6px;height:1.6px;background:#a5a5a5;"></div>
<div style="left:0px;top:1143.74px;width:44px;height:1.2px;background:#ebebeb;"></div>
<div class="t" style="left:0;width:42px;text-align:center;top:1120.7px;font-size:18px;font-weight:bold;color:#6a6a6a;text-shadow:0 1px 0 #f4f4f4;">36</div>
<div style="left:0px;top:1166.18px;width:45.6px;height:1.6px;background:#a5a5a5;"></div>
<div style="left:0px;top:1167.78px;width:44px;height:1.2px;background:#ebebeb;"></div>
<div class="t" style="left:0;width:42px;text-align:center;top:1144.74px;font-size:18px;font-weight:bold;color:#6a6a6a;text-shadow:0 1px 0 #f4f4f4;">37</div>
<div style="left:0px;top:1190.22px;width:45.6px;height:1.6px;background:#a5a5a5;"></div>
<div style="left:0px;top:1191.82px;width:44px;height:1.2px;background:#ebebeb;"></div>
<div class="t" style="left:0;width:42px;text-align:center;top:1168.78px;font-size:18px;font-weight:bold;color:#6a6a6a;text-shadow:0 1px 0 #f4f4f4;">38</div>
<div style="left:0px;top:1214.26px;width:45.6px;height:1.6px;background:#a5a5a5;"></div>
<div style="left:0px;top:1215.86px;width:44px;height:1.2px;background:#ebebeb;"></div>
<div class="t" style="left:0;width:42px;text-align:center;top:1192.82px;font-size:18px;font-weight:bold;color:#6a6a6a;text-shadow:0 1px 0 #f4f4f4;">39</div>
<div style="left:0px;top:1238.3px;width:45.6px;height:1.6px;background:#a5a5a5;"></div>
<div style="left:0px;top:1239.9px;width:44px;height:1.2px;background:#ebebeb;"></div>
<div class="t" style="left:0;width:42px;text-align:center;top:1216.86px;font-size:18px;font-weight:bold;color:#6a6a6a;text-shadow:0 1px 0 #f4f4f4;">40</div>
<div style="left:0px;top:1262.34px;width:45.6px;height:1.6px;background:#a5a5a5;"></div>
<div style="left:0px;top:1263.94px;width:44px;height:1.2px;background:#ebebeb;"></div>
<div class="t" style="left:0;width:42px;text-align:center;top:1240.9px;font-size:18px;font-weight:bold;color:#6a6a6a;text-shadow:0 1px 0 #f4f4f4;">41</div>
<div style="left:0px;top:1286.38px;width:45.6px;height:1.6px;background:#a5a5a5;"></div>
<div style="left:0px;top:1287.98px;width:44px;height:1.2px;background:#ebebeb;"></div>
<div class="t" style="left:0;width:42px;text-align:center;top:1264.94px;font-size:18px;font-weight:bold;color:#6a6a6a;text-shadow:0 1px 0 #f4f4f4;">42</div>
<div style="left:0px;top:1310.42px;width:45.6px;height:1.6px;background:#a5a5a5;"></div>
<div style="left:0px;top:1312.02px;width:44px;height:1.2px;background:#ebebeb;"></div>
<div class="t" style="left:0;width:42px;text-align:center;top:1288.98px;font-size:18px;font-weight:bold;color:#6a6a6a;text-shadow:0 1px 0 #f4f4f4;">43</div>
<div style="left:0px;top:1334.46px;width:45.6px;height:1.6px;background:#a5a5a5;"></div>
<div style="left:0px;top:1336.06px;width:44px;height:1.2px;background:#ebebeb;"></div>
<div class="t" style="left:0;width:42px;text-align:center;top:1313.02px;font-size:18px;font-weight:bold;color:#6a6a6a;text-shadow:0 1px 0 #f4f4f4;">44</div>
<div style="left:0px;top:1358.5px;width:45.6px;height:1.6px;background:#a5a5a5;"></div>
<div style="left:0px;top:1360.1px;width:44px;height:1.2px;background:#ebebeb;"></div>
<div class="t" style="left:0;width:42px;text-align:center;top:1337.06px;font-size:18px;font-weight:bold;color:#6a6a6a;text-shadow:0 1px 0 #f4f4f4;">45</div>
<div style="left:0px;top:1382.54px;width:45.6px;height:1.6px;background:#a5a5a5;"></div>
<div style="left:0px;top:1384.14px;width:44px;height:1.2px;background:#ebebeb;"></div>
<div class="t" style="left:0;width:42px;text-align:center;top:1361.1px;font-size:18px;font-weight:bold;color:#6a6a6a;text-shadow:0 1px 0 #f4f4f4;">46</div>
<div style="left:2279px;top:236px;width:25px;height:1148px;background:#fafafa;border-left:1.6px solid #a6a6a6;"></div>
<div style="left:2280.6px;top:236px;width:23.4px;height:20.8px;background:#fff;border-bottom:1.6px solid #bdbdbd;"></div>
<div style="left:2285px;top:244px;width:14px;height:1.6px;background:#9a9a9a;"></div>
<div style="left:2285px;top:249px;width:14px;height:1.6px;background:#9a9a9a;"></div>
<div style="left:2286.6px;top:258px;width:12.8px;height:136.5px;background:#c1c1c1;border-radius:7px;"></div>
<div style="left:0px;top:203px;width:2304px;height:28px;background:#fff;border-top:1.6px solid #b9b9b9;border-bottom:1.6px solid #b0b0b0;"></div>
<div style="left:0px;top:204.6px;width:184px;height:24.8px;background:#fff;"></div>
<div class="t" style="left:83.5px;top:208.14px;font-size:17.5px;color:#111;">K8</div>
<div style="left:184px;top:204.6px;width:29px;height:24.8px;background:linear-gradient(#f2f2f2,#dcdcdc);border-left:1px solid #c8c8c8;border-right:1px solid #c8c8c8;"></div>
<svg style="left:191px;top:209px" width="14" height="18"><path d="M3 6 L7 1.5 L11 6Z M3 11 L7 15.5 L11 11Z" fill="#222"/></svg>
<div style="left:213px;top:204.6px;width:159px;height:24.8px;background:linear-gradient(#f0f0f0,#d8d8d8);"></div>
<div style="left:371px;top:204.6px;width:1.6px;height:24.8px;background:#b8b8b8;"></div>
<svg style="left:228px;top:207px" width="140" height="22"><circle cx="12.3" cy="10.6" r="9.6" fill="#bdbdbd"/><path d="M8 6.3 L16.6 14.9 M16.6 6.3 L8 14.9" stroke="#fff" stroke-width="2.6"/><circle cx="49" cy="10.6" r="9.6" fill="#bdbdbd"/><path d="M44 10.8 L48 14.6 L54.5 6.8" stroke="#fff" stroke-width="2.6" fill="none"/><path d="M84 0 A 13 13 0 0 0 84 21.5" stroke="#c9c9c9" stroke-width="1.2" fill="none"/><circle cx="91" cy="10.6" r="6" fill="#d6d6d6"/></svg>
<div class="t" style="left:343px;top:207.38px;font-size:22px;font-family:'Liberation Serif';font-style:italic;color:#333;">&#402;x</div>
<div class="t" style="left:388px;top:208.02px;font-size:19px;letter-spacing:0.5px;color:#111;">Estimated</div>
<div style="left:2280px;top:204.6px;width:24px;height:24.8px;background:#fff;border-left:1.6px solid #b0b0b0;"></div>
<svg style="left:2284px;top:213px" width="14" height="10"><path d="M1 1 L13 1 L7 9Z" fill="#222"/></svg>
<div style="left:0px;top:0px;width:2304px;height:50.5px;background:linear-gradient(#e9e9e9,#d5d5d5);border-bottom:1px solid #b5b5b5;"></div>
<div style="left:239.4px;top:5px;width:1.6px;height:40px;background:repeating-linear-gradient(180deg,#8c8c8c 0,#8c8c8c 1.6px,transparent 1.6px,transparent 4.8px);"></div>
<div style="left:434.4px;top:5px;width:1.6px;height:40px;background:repeating-linear-gradient(180deg,#8c8c8c 0,#8c8c8c 1.6px,transparent 1.6px,transparent 4.8px);"></div>
<div style="left:565px;top:5px;width:1.6px;height:40px;background:repeating-linear-gradient(180deg,#8c8c8c 0,#8c8c8c 1.6px,transparent 1.6px,transparent 4.8px);"></div>
<div style="left:757.6px;top:5px;width:1.6px;height:40px;background:repeating-linear-gradient(180deg,#8c8c8c 0,#8c8c8c 1.6px,transparent 1.6px,transparent 4.8px);"></div>
<div style="left:1000.6px;top:5px;width:1.6px;height:40px;background:repeating-linear-gradient(180deg,#8c8c8c 0,#8c8c8c 1.6px,transparent 1.6px,transparent 4.8px);"></div>
<svg style="left:0;top:0" width="8" height="8"><path d="M0 0 L8 0 Q0 0 0 8Z" fill="#111"/></svg>
<svg style="left:9px;top:7px" width="30" height="33">
<path d="M4.5 3 L21.5 3 L27 8.5 L27 30.5 L4.5 30.5 Z" fill="#fdfdfd" stroke="#7a7a7a" stroke-width="1"/>
<path d="M21.5 3 L21.5 8.5 L27 8.5" fill="#e8e8e8" stroke="#9a9a9a" stroke-width="0.8"/>
<circle cx="8.5" cy="8.5" r="7.8" fill="#2c9a2c" stroke="#1d6e1d" stroke-width="0.8"/>
<path d="M8.5 4 L8.5 13 M4 8.5 L13 8.5" stroke="#fff" stroke-width="2.8"/></svg>
<svg style="left:55px;top:10px" width="32" height="28">
<rect x="0.5" y="0.5" width="30" height="27" rx="1.5" fill="#3a3a3a" stroke="#2a2a2a"/>
<rect x="1" y="1" width="29" height="5" fill="#cfcfcf"/>
<circle cx="4" cy="3.5" r="1.3" fill="#e0443a"/><circle cx="8" cy="3.5" r="1.3" fill="#e8a030"/><circle cx="12" cy="3.5" r="1.3" fill="#50b040"/>
<rect x="1" y="6" width="6.5" height="21" fill="#e4e8f0"/><rect x="1" y="7.5" width="6.5" height="2" fill="#3a70d0"/>
<rect x="10.5" y="8.5" width="7" height="7" fill="#3a86e8"/><rect x="20" y="8.5" width="7" height="7" fill="#50c888"/>
<rect x="10.5" y="17" width="7" height="7" fill="#f07838"/><rect x="20" y="17" width="7" height="7" fill="#f8c070"/></svg>
<svg style="left:100px;top:9px" width="34" height="31">
<path d="M1 4 Q1 2 3 2 L11 2 L13 4.5 L30 4.5 Q32 4.5 32 6.5 L32 26 L1 26Z" fill="#7ea6c8" stroke="#5f88ad" stroke-width="0.8"/>
<path d="M1 9 L32 9 L32 26 Q32 27 31 27 L2 27 Q1 27 1 26Z" fill="#95bcdc" stroke="#6a94ba" stroke-width="0.8"/>
<path d="M14 17 Q22 14 24 22 L27 22 L21 30 L15 22 L18.5 22 Q18 19 14 17Z" fill="#fafafa" stroke="#9a9a9a" stroke-width="0.8"/></svg>
<svg style="left:148px;top:9px" width="31" height="30">
<path d="M2 1 L27 1 Q29.5 1 29.5 3.5 L29.5 27 Q29.5 29 27 29 L3 29 Q1 29 1 27 L1 2Z" fill="#161616"/>
<rect x="6" y="1" width="18.5" height="12" fill="#efefef"/><rect x="6" y="1" width="18.5" height="2" fill="#5a80c0"/>
<path d="M8 6.5 L22.5 6.5 M8 9.5 L22.5 9.5" stroke="#aaa" stroke-width="1"/>
<rect x="7" y="18" width="16" height="11" fill="#d8d8d8"/><rect x="9.5" y="20" width="3.5" height="8" fill="#161616"/></svg>
<svg style="left:193px;top:8px" width="34" height="32">
<rect x="8" y="1.5" width="17" height="8" fill="#fbfbfb" stroke="#999" stroke-width="0.8"/>
<rect x="5" y="8" width="23" height="6" fill="#3a3a3a"/>
<path d="M2 13 Q2 11 4 11 L29 11 Q31 11 31 13 L31 24 L2 24Z" fill="#cdcdcd" stroke="#888" stroke-width="0.8"/>
<circle cx="5" cy="15" r="0.9" fill="#e33"/>
<rect x="8" y="19" width="17" height="12" fill="#fff" stroke="#aaa" stroke-width="0.6"/><rect x="9.5" y="20" width="14" height="7" fill="#2f78c0"/><path d="M11 27 Q15 21 22 20" stroke="#7ccf7c" stroke-width="2" fill="none"/></svg>
<svg style="left:250px;top:8px" width="32" height="32">
<path d="M2.5 1.5 L17.5 22 M29 1.5 L14 22" stroke="#8a8a8a" stroke-width="2"/>
<path d="M3.2 1.5 L17 20.5" stroke="#f0f0f0" stroke-width="0.7"/>
<g transform="translate(7.5,26.5) rotate(30)"><ellipse rx="4.3" ry="6" fill="none" stroke="#9a2a1a" stroke-width="2.8"/></g>
<g transform="translate(24,26.5) rotate(-30)"><ellipse rx="4.3" ry="6" fill="none" stroke="#9a2a1a" stroke-width="2.8"/></g></svg>
<svg style="left:297px;top:9px" width="30" height="31">
<path d="M1 1 L12 1 L17 6 L17 21 L1 21Z" fill="#fff" stroke="#888"/>
<path d="M10 10 L21 10 L27 16 L27 30 L10 30Z" fill="#fff" stroke="#888"/>
<path d="M13 19 L24 19 M13 22 L24 22 M13 25 L24 25" stroke="#aaa"/></svg>
<svg style="left:344px;top:8px" width="30" height="32">
<rect x="1" y="4" width="20" height="24" rx="2" fill="#d49a3a" stroke="#9c6a20"/>
<rect x="6" y="1" width="10" height="5" rx="1.5" fill="#ddd" stroke="#888"/>
<path d="M11 13 L22 13 L28 19 L28 31 L11 31Z" fill="#fff" stroke="#888"/>
<path d="M14 21 L25 21 M14 24 L25 24 M14 27 L25 27" stroke="#aaa"/></svg>
<svg style="left:389px;top:8px" width="34" height="32">
<path d="M22 9 L27 3 Q30 0.5 32 3 Q34 5.5 31 8 L26 13Z" fill="#e4e4e4" stroke="#8a8a8a" stroke-width="0.9"/>
<path d="M18 9 L27 17 L23 21 L14 13Z" fill="#d8d8d8" stroke="#7a7a7a" stroke-width="0.9"/>
<path d="M14 13 L23 21 Q18 29 5 28 Q3 24 2 22 Q9 19 14 13Z" fill="#a8742a" stroke="#6a4612" stroke-width="0.9"/>
<path d="M6 20 L15 27 M9 17 L19 25" stroke="#7a5218" stroke-width="0.8"/>
<path d="M2 22 Q5 27 12 28 Q8 31 5 30 Q1 27 2 22Z" fill="#3a4fd0"/>
<ellipse cx="14" cy="30" rx="8" ry="1.8" fill="#5a6ae0" opacity="0.8"/></svg>
<svg style="left:443px;top:11px" width="36" height="28">
<path d="M8 18 A12.5 12.5 0 1 1 26 25 L23 21 A7.6 7.6 0 1 0 13 17 Z" fill="#f3b23a" stroke="#b07a1a" stroke-width="0.9"/>
<path d="M2 4.3 L2 22.3 L19.2 22.3 Z" fill="#f3b23a" stroke="#b07a1a" stroke-width="0.9" stroke-linejoin="round"/></svg>
<svg style="left:484.5px;top:21px" width="12" height="8"><path d="M0 0 L9 0 L4.5 7 Z" fill="#222"/></svg>
<svg style="left:505px;top:11px" width="36" height="28" opacity="0.55">
<path d="M27 18 A12.5 12.5 0 1 0 9 25 L12 21 A7.6 7.6 0 1 1 22 17 Z" fill="#b8d4ec" stroke="#7aa0c8" stroke-width="0.9"/>
<path d="M33 4.3 L33 22.3 L15.8 22.3 Z" fill="#b8d4ec" stroke="#7aa0c8" stroke-width="0.9" stroke-linejoin="round"/></svg>
<svg style="left:545.5px;top:21px" width="12" height="8"><path d="M0 0 L9 0 L4.5 7 Z" fill="#999"/></svg>
<div class="t" style="left:582px;top:8px;font-size:36px;line-height:36px;height:36px;color:#8fa8dc;font-family:'Liberation Sans'">&#931;</div>
<svg style="left:615.5px;top:21px" width="12" height="8"><path d="M0 0 L9 0 L4.5 7 Z" fill="#999"/></svg>
<svg style="left:637px;top:9px" width="34" height="32">
<text x="1" y="13.5" font-family="Liberation Serif" font-size="17" font-weight="bold" fill="#e8b878">A</text>
<text x="1.5" y="30" font-family="Liberation Serif" font-size="17" font-weight="bold" fill="#8aa6d8">Z</text>
<path d="M23 9 L23 26 M17 20 L23 27 L29 20" stroke="#c8c8c8" stroke-width="3" fill="none"/>
<path d="M23 9 L23 26 M17 20 L23 27 L29 20" stroke="#eee" stroke-width="1" fill="none"/></svg>
<svg style="left:676.5px;top:21px" width="12" height="8"><path d="M0 0 L9 0 L4.5 7 Z" fill="#999"/></svg>
<svg style="left:698px;top:9px" width="34" height="30">
<path d="M1 2 L29 2 L18 15 L18 27 L12 27 L12 15 Z" fill="#d8d8d8" stroke="#aaa"/>
<path d="M20 19 L31 19 M20 25 L31 25" stroke="#8aa6d8" stroke-width="3"/></svg>
<svg style="left:737.5px;top:21px" width="12" height="8"><path d="M0 0 L9 0 L4.5 7 Z" fill="#999"/></svg>
<div style="left:763.4px;top:3.5px;width:41px;height:40.5px;border-radius:6px;background:linear-gradient(#9a9a9a,#b4b4b4);border:1px solid #777;"></div>
<svg style="left:769px;top:9px" width="30" height="30">
<path d="M3 15 Q3 3 15 3 L27 3 L27 27 L15 27 Q3 27 3 15Z" fill="#a5dc8a" stroke="#4a8a3a"/>
<text x="8" y="22" font-family="Liberation Serif" font-style="italic" font-size="17" fill="#234">fx</text></svg>
<svg style="left:818px;top:10px" width="27" height="28">
<rect x="0.5" y="0.5" width="25" height="27" fill="#fff" stroke="#777"/>
<rect x="1" y="1" width="25" height="8" fill="#ddd"/>
<rect x="3" y="3" width="5" height="4" fill="#4aa0e0"/><rect x="10" y="3" width="5" height="4" fill="#eee"/><rect x="17" y="3" width="5" height="4" fill="#eee"/>
<path d="M1 14 L26 14 M1 19 L26 19 M1 24 L26 24" stroke="#999"/>
<circle cx="4" cy="1.5" r="1.5" fill="#e33"/></svg>
<svg style="left:860px;top:9px" width="34" height="32">
<rect x="1" y="9" width="18" height="16" fill="#4a7ed0" stroke="#2f5a9c"/>
<rect x="10" y="1" width="18" height="16" fill="#222"/><rect x="13" y="3" width="12" height="12" fill="#5ab4f0"/>
<path d="M22 27 L22 14 L32 11 L32 24" stroke="#1c4fa0" stroke-width="2" fill="none"/>
<ellipse cx="20" cy="28" rx="3" ry="2.5" fill="#1c4fa0"/><ellipse cx="30" cy="25" rx="3" ry="2.5" fill="#1c4fa0"/></svg>
<div style="left:909.2px;top:9.8px;width:79.7px;height:29.6px;background:#fff;border:1px solid #a0a0a0;"></div>
<div style="left:965.4px;top:10.8px;width:23.5px;height:27.6px;background:linear-gradient(#d8d8d8,#b8b8b8 50%,#d0d0d0);border-left:1px solid #aaa;"></div>
<svg style="left:973px;top:22px" width="12" height="8"><path d="M0 0 L9 0 L4.5 7 Z" fill="#333"/></svg>
<div class="t" style="left:912.7px;top:15.42px;font-size:19px;color:#111;">100%</div>
<svg style="left:1012px;top:10px" width="30" height="30">
<circle cx="15" cy="15" r="14" fill="#7b3fd0" stroke="#eee" stroke-width="1.5"/>
<text x="9" y="22" font-family="Liberation Sans" font-weight="bold" font-size="19" fill="#fff">?</text></svg>
<div style="left:1872px;top:8.5px;width:422.5px;height:33px;border-radius:16.5px;background:linear-gradient(#f4f4f4,#dcdcdc);border:1.4px solid #7a7a7a;"></div>
<div style="left:1924.5px;top:11px;width:297px;height:28px;border-radius:14px;background:#fff;border:1px solid #bbb;"></div>
<svg style="left:1880px;top:14px" width="34" height="22">
<circle cx="8.5" cy="8.5" r="6.5" fill="none" stroke="#222" stroke-width="2.6"/>
<path d="M13 13 L18 18" stroke="#222" stroke-width="3.2"/><path d="M22 8 L30 8 L26 12Z" fill="#222"/></svg>
<div class="t" style="left:1936px;top:16.42px;font-size:19px;color:#111;">center</div>
<svg style="left:2194px;top:13px" width="24" height="24">
<circle cx="12" cy="12" r="11" fill="#888"/><path d="M7.5 7.5 L16.5 16.5 M16.5 7.5 L7.5 16.5" stroke="#fff" stroke-width="2.6"/></svg>
<div style="left:2256.5px;top:10px;width:1.2px;height:30px;background:#b0b0b0;"></div>
<svg style="left:2229px;top:16px" width="60" height="20"><path d="M14 2 L14 16 L3 9Z M38 2 L38 16 L51 9Z" fill="#222"/></svg>
<svg style="left:2292px;top:0" width="12" height="12"><path d="M12 0 L0 0 Q12 0 12 12Z" fill="#111"/></svg>
<div style="left:0px;top:50.5px;width:2304px;height:153.5px;background:#c6dcc5;"></div>
<div style="left:0px;top:50.5px;width:2304px;height:33.4px;background:linear-gradient(#d3e1ce,#b1c9ae);border-bottom:1.4px solid #a2bc9e;"></div>
<div style="left:0px;top:83.9px;width:2304px;height:2.7px;background:#cde4cf;border-bottom:1px solid #b2cab0;"></div>
<div style="left:17.5px;top:51.5px;width:127.1px;height:34px;background:linear-gradient(#e4eee2,#d6e6d4);border-left:1px solid #98b894;border-right:1px solid #98b894;"></div>
<div style="left:254.4px;top:51.5px;width:1.2px;height:32.4px;background:#97bd92;"></div>
<div style="left:363.4px;top:51.5px;width:1.2px;height:32.4px;background:#97bd92;"></div>
<div style="left:473.7px;top:51.5px;width:1.2px;height:32.4px;background:#97bd92;"></div>
<div style="left:606.8px;top:51.5px;width:1.2px;height:32.4px;background:#97bd92;"></div>
<div style="left:739.6px;top:51.5px;width:1.2px;height:32.4px;background:#97bd92;"></div>
<div style="left:830.7px;top:51.5px;width:1.2px;height:32.4px;background:#97bd92;"></div>
<div style="left:944.1px;top:51.5px;width:1.2px;height:32.4px;background:#97bd92;"></div>
<div style="left:1084.7px;top:51.5px;width:1.2px;height:32.4px;background:#97bd92;"></div>
<div style="left:2212.8px;top:55px;width:1.2px;height:25px;background:#8fb08a;"></div>
<div class="t" style="left:72.4px;top:58.17px;font-size:17.4px;font-weight:bold;color:#2a2a2a;letter-spacing:0.6px;text-shadow:0 1px 0 rgba(255,255,255,0.5);">Home</div>
<div class="t" style="left:170px;top:58.17px;font-size:17.4px;font-weight:bold;color:#2a2a2a;letter-spacing:0.6px;text-shadow:0 1px 0 rgba(255,255,255,0.5);">Layout</div>
<div class="t" style="left:281px;top:58.17px;font-size:17.4px;font-weight:bold;color:#2a2a2a;letter-spacing:0.6px;text-shadow:0 1px 0 rgba(255,255,255,0.5);">Tables</div>
<div class="t" style="left:390px;top:58.17px;font-size:17.4px;font-weight:bold;color:#2a2a2a;letter-spacing:0.6px;text-shadow:0 1px 0 rgba(255,255,255,0.5);">Charts</div>
<div class="t" style="left:499.5px;top:58.17px;font-size:17.4px;font-weight:bold;color:#2a2a2a;letter-spacing:0.6px;text-shadow:0 1px 0 rgba(255,255,255,0.5);">SmartArt</div>
<div class="t" style="left:632.6px;top:58.17px;font-size:17.4px;font-weight:bold;color:#2a2a2a;letter-spacing:0.6px;text-shadow:0 1px 0 rgba(255,255,255,0.5);">Formulas</div>
<div class="t" style="left:765.4px;top:58.17px;font-size:17.4px;font-weight:bold;color:#2a2a2a;letter-spacing:0.6px;text-shadow:0 1px 0 rgba(255,255,255,0.5);">Data</div>
<div class="t" style="left:856.5px;top:58.17px;font-size:17.4px;font-weight:bold;color:#2a2a2a;letter-spacing:0.6px;text-shadow:0 1px 0 rgba(255,255,255,0.5);">Review</div>
<div class="t" style="left:970px;top:58.17px;font-size:17.4px;font-weight:bold;color:#2a2a2a;letter-spacing:0.6px;text-shadow:0 1px 0 rgba(255,255,255,0.5);">Developer</div>
<svg style="left:39px;top:57px" width="20" height="18"><path d="M1 9 L9.5 1 L18 9 L15.5 9 L15.5 17 L11.5 17 L11.5 12 L7.5 12 L7.5 17 L3.5 17 L3.5 9Z" fill="#222"/></svg>
<svg style="left:2226px;top:60px" width="20" height="14"><path d="M2 11 L9.5 3.5 L17 11" stroke="#222" stroke-width="2.6" fill="none"/></svg>
<svg style="left:2259px;top:55px" width="40" height="24"><g transform="translate(11,12)">
<circle r="6.5" fill="none" stroke="#444" stroke-width="4"/><g stroke="#444" stroke-width="3.5">
<path d="M0 -10 L0 10 M-10 0 L10 0 M-7 -7 L7 7 M7 -7 L-7 7"/></g><circle r="3" fill="#c4dcc0"/></g>
<path d="M26 9 L36 9 L31 15Z" fill="#444"/></svg>
<div style="left:4.7px;top:88px;width:2294.3px;height:112px;background:linear-gradient(#ededed,#e0e0e0);border:1px solid #b7ccb3;border-radius:8px;"></div>
<div class="t" style="left:3px;width:200px;text-align:center;top:88.94px;font-size:14.6px;color:#222;">Edit</div>
<div class="t" style="left:296px;width:200px;text-align:center;top:88.94px;font-size:14.6px;color:#222;">Font</div>
<div class="t" style="left:674px;width:200px;text-align:center;top:88.94px;font-size:14.6px;color:#222;">Alignment</div>
<div class="t" style="left:996px;width:200px;text-align:center;top:88.94px;font-size:14.6px;color:#222;">Number</div>
<div class="t" style="left:1294px;width:200px;text-align:center;top:88.94px;font-size:14.6px;color:#222;">Format</div>
<div class="t" style="left:1588px;width:200px;text-align:center;top:88.94px;font-size:14.6px;color:#222;">Cells</div>
<div class="t" style="left:1791px;width:200px;text-align:center;top:88.94px;font-size:14.6px;color:#222;">Themes</div>
<div style="left:10px;top:107.5px;width:190px;height:1.5px;background:linear-gradient(#d4d4d4,#f8f8f8);"></div>
<div style="left:216px;top:107.5px;width:364px;height:1.5px;background:linear-gradient(#d4d4d4,#f8f8f8);"></div>
<div style="left:598px;top:107.5px;width:357px;height:1.5px;background:linear-gradient(#d4d4d4,#f8f8f8);"></div>
<div style="left:972px;top:107.5px;width:250px;height:1.5px;background:linear-gradient(#d4d4d4,#f8f8f8);"></div>
<div style="left:1240px;top:107.5px;width:313px;height:1.5px;background:linear-gradient(#d4d4d4,#f8f8f8);"></div>
<div style="left:1571px;top:107.5px;width:235px;height:1.5px;background:linear-gradient(#d4d4d4,#f8f8f8);"></div>
<div style="left:1824px;top:107.5px;width:134px;height:1.5px;background:linear-gradient(#d4d4d4,#f8f8f8);"></div>
<div style="left:207px;top:95px;width:1.6px;height:100px;background:repeating-linear-gradient(180deg,#9a9a9a 0,#9a9a9a 1.6px,transparent 1.6px,transparent 4.8px);"></div>
<div style="left:589.5px;top:95px;width:1.6px;height:100px;background:repeating-linear-gradient(180deg,#9a9a9a 0,#9a9a9a 1.6px,transparent 1.6px,transparent 4.8px);"></div>
<div style="left:963.8px;top:95px;width:1.6px;height:100px;background:repeating-linear-gradient(180deg,#9a9a9a 0,#9a9a9a 1.6px,transparent 1.6px,transparent 4.8px);"></div>
<div style="left:1230.9px;top:95px;width:1.6px;height:100px;background:repeating-linear-gradient(180deg,#9a9a9a 0,#9a9a9a 1.6px,transparent 1.6px,transparent 4.8px);"></div>
<div style="left:1562.3px;top:95px;width:1.6px;height:100px;background:repeating-linear-gradient(180deg,#9a9a9a 0,#9a9a9a 1.6px,transparent 1.6px,transparent 4.8px);"></div>
<div style="left:1815.3px;top:95px;width:1.6px;height:100px;background:repeating-linear-gradient(180deg,#9a9a9a 0,#9a9a9a 1.6px,transparent 1.6px,transparent 4.8px);"></div>
<div style="left:1967px;top:95px;width:1.6px;height:100px;background:repeating-linear-gradient(180deg,#9a9a9a 0,#9a9a9a 1.6px,transparent 1.6px,transparent 4.8px);"></div>
<svg style="left:19px;top:118px" width="40" height="50">
<rect x="1" y="6" width="30" height="40" rx="2" fill="#d99a36" stroke="#a8701e"/>
<path d="M1 8 L31 8 L31 46 L1 46Z" fill="url(#pg)"/>
<defs><linearGradient id="pg" x1="0" x2="0" y1="0" y2="1"><stop offset="0" stop-color="#f0c060"/><stop offset="1" stop-color="#c98520"/></linearGradient></defs>
<rect x="9" y="2" width="14" height="8" rx="3" fill="#e8e8e8" stroke="#888"/>
<path d="M13 18 L30 18 L37 25 L37 48 L13 48Z" fill="#fff" stroke="#999"/>
<path d="M16 28 L34 28 M16 32 L34 32 M16 36 L34 36 M16 40 L34 40 M16 44 L34 44" stroke="#bbb"/></svg>
<svg style="left:71px;top:139.5px" width="9" height="6"><path d="M0 0 L9 0 L4.5 6 Z" fill="#444"/></svg>
<div class="t" style="left:26.8px;top:172.28px;font-size:16.5px;color:#222;">Paste</div>
<svg style="left:99px;top:116px" width="26" height="30">
<rect x="0.5" y="0.5" width="24" height="28" fill="#cfe6f8" stroke="#7aa6cc"/><rect x="1" y="1" width="24" height="5" fill="#fff"/>
<path d="M12.5 9 L12.5 19 M7 15 L12.5 21 L18 15" stroke="#2f7fd0" stroke-width="3.4" fill="none"/></svg>
<div class="t" style="left:134.6px;top:122.08px;font-size:16.5px;color:#222;">Fill</div>
<svg style="left:179.5px;top:127.5px" width="10" height="6.5"><path d="M0 0 L10 0 L5 6.5 Z" fill="#444"/></svg>
<svg style="left:97px;top:161px" width="30" height="28">
<path d="M2 20 L17 3 Q20 0 24 3 L27 6 Q30 9 27 13 L12 27 Q8 29 5 26 L2 23 Q0 21 2 20Z" fill="#e6e6f4" stroke="#7a7a9a" stroke-width="1.2"/>
<path d="M5 17 L14 26" stroke="#9a9ab8"/></svg>
<div class="t" style="left:134.6px;top:166.78px;font-size:16.5px;color:#222;">Clear</div>
<svg style="left:179.5px;top:172.5px" width="10" height="6.5"><path d="M0 0 L10 0 L5 6.5 Z" fill="#444"/></svg>
<div style="left:216px;top:116px;width:184.5px;height:30.4px;background:linear-gradient(#ececec,#e4e4e4);border:1px solid #d2d2d2;border-radius:5px;"></div>
<div style="left:377.9px;top:117px;width:1px;height:28.4px;background:#d4d4d4;"></div>
<div class="t" style="left:220.8px;top:122.11px;font-size:17px;color:#8a8a8a;letter-spacing:0.75px;">Calibri (Body)</div>
<svg style="left:384px;top:129px" width="9" height="5.5"><path d="M0 0 L9 0 L4.5 5.5 Z" fill="#aaa"/></svg>
<div style="left:403.6px;top:116px;width:75.4px;height:30.4px;background:linear-gradient(#ececec,#e4e4e4);border:1px solid #d2d2d2;border-radius:5px;"></div>
<div style="left:456px;top:117px;width:1px;height:28.4px;background:#d4d4d4;"></div>
<div class="t" style="left:408.8px;top:122.11px;font-size:17px;color:#8a8a8a;">11</div>
<svg style="left:462.5px;top:129px" width="9" height="5.5"><path d="M0 0 L9 0 L4.5 5.5 Z" fill="#aaa"/></svg>
<div style="left:489px;top:114.5px;width:88px;height:33px;background:linear-gradient(#ececec,#e4e4e4);border:1px solid #d2d2d2;border-radius:5px;"></div>
<div style="left:532px;top:115.5px;width:1px;height:31px;background:#d4d4d4;"></div>
<div class="t" style="left:495px;top:113px;font-size:26px;line-height:30px;height:30px;font-family:'Liberation Serif';color:#a0a0a0;">A</div>
<div class="t" style="left:539.5px;top:113px;font-size:26px;line-height:30px;height:30px;font-family:'Liberation Serif';color:#a0a0a0;">A</div>
<svg style="left:516px;top:127px" width="60" height="10"><path d="M0 5.5 L5 0.5 L10 5.5Z" fill="#8ab4e0"/><path d="M44.5 0.5 L54.5 0.5 L49.5 5.5Z" fill="#8ab4e0"/></svg>
<div style="left:216px;top:158px;width:133.5px;height:33.5px;background:linear-gradient(#ececec,#e4e4e4);border:1px solid #d2d2d2;border-radius:5px;"></div>
<div style="left:259.5px;top:159px;width:1px;height:31.5px;background:#d4d4d4;"></div>
<div style="left:304.2px;top:159px;width:1px;height:31.5px;background:#d4d4d4;"></div>
<div class="t" style="left:231px;top:160px;font-size:26px;line-height:30px;height:30px;font-family:'Liberation Serif';font-weight:bold;color:#a8a8a8;">B</div>
<div class="t" style="left:276px;top:160px;font-size:26px;line-height:30px;height:30px;font-family:'Liberation Serif';font-style:italic;color:#a8a8a8;">I</div>
<div class="t" style="left:319px;top:160px;font-size:26px;line-height:30px;height:30px;font-family:'Liberation Serif';color:#a8a8a8;">U</div>
<div style="left:320px;top:183.5px;width:17.5px;height:1.3px;background:#a8a8a8;"></div>
<div style="left:366.7px;top:157.5px;width:59.9px;height:34px;background:linear-gradient(#fbfbfb,#e2e2e2);border:1px solid #a6a6a6;border-radius:5px;box-shadow:0 1px 1px rgba(0,0,0,0.15);"></div>
<div style="left:379px;top:164.6px;width:22px;height:22.2px;border:2.4px solid #111;"></div>
<svg style="left:406px;top:172.5px" width="9" height="6"><path d="M0 0 L9 0 L4.5 6 Z" fill="#222"/></svg>
<div style="left:444px;top:158px;width:133px;height:33.5px;background:linear-gradient(#ececec,#e4e4e4);border:1px solid #d2d2d2;border-radius:5px;"></div>
<div style="left:491.5px;top:159px;width:1px;height:31.5px;background:#d4d4d4;"></div>
<div style="left:509.9px;top:159px;width:1px;height:31.5px;background:#d4d4d4;"></div>
<div style="left:559.5px;top:159px;width:1px;height:31.5px;background:#d4d4d4;"></div>
<svg style="left:455px;top:159px" width="30" height="26">
<path d="M3 13 L13 6 L22 15 Q18 21 13 22 Q6 20 3 13Z" fill="#e8e8e8" stroke="#8a8a8a" stroke-width="1"/>
<path d="M13 1 L13 12" stroke="#888" stroke-width="1.6"/><circle cx="13" cy="2" r="1.6" fill="#ccc" stroke="#888" stroke-width="0.6"/>
<path d="M16 7 Q25 7 25 16" stroke="#5a98d8" stroke-width="2.4" fill="none"/></svg>
<div style="left:451px;top:182px;width:31px;height:6.5px;background:#e9e77a;"></div>
<svg style="left:495.5px;top:174px" width="9" height="5.5"><path d="M0 0 L9 0 L4.5 5.5 Z" fill="#aaa"/></svg>
<div class="t" style="left:523px;top:158px;font-size:26px;line-height:30px;height:30px;font-family:'Liberation Serif';color:#a0a0a0;">A</div>
<div style="left:519px;top:182.5px;width:30px;height:6px;background:#ea8585;"></div>
<svg style="left:563px;top:174px" width="9" height="5.5"><path d="M0 0 L9 0 L4.5 5.5 Z" fill="#aaa"/></svg>
<div style="left:599.5px;top:115px;width:132.3px;height:32.4px;background:linear-gradient(#ececec,#e4e4e4);border:1px solid #d2d2d2;border-radius:5px;"></div>
<div style="left:641.9px;top:116px;width:1px;height:30.4px;background:#d4d4d4;"></div>
<div style="left:686.9px;top:116px;width:1px;height:30.4px;background:#d4d4d4;"></div>
<svg style="left:607px;top:120px" width="26" height="11.6"><rect x="0" y="0" width="26" height="1.6" fill="#b8b8b8"/><rect x="0" y="3.2" width="26" height="1.6" fill="#b8b8b8"/><rect x="0" y="6.4" width="26" height="1.6" fill="#b8b8b8"/></svg>
<svg style="left:652px;top:126px" width="26" height="11.6"><rect x="0" y="0" width="26" height="1.6" fill="#b8b8b8"/><rect x="0" y="3.2" width="26" height="1.6" fill="#b8b8b8"/><rect x="0" y="6.4" width="26" height="1.6" fill="#b8b8b8"/></svg>
<svg style="left:697px;top:132px" width="26" height="11.6"><rect x="0" y="0" width="26" height="1.6" fill="#b8b8b8"/><rect x="0" y="3.2" width="26" height="1.6" fill="#b8b8b8"/><rect x="0" y="6.4" width="26" height="1.6" fill="#b8b8b8"/></svg>
<div style="left:741.8px;top:114.5px;width:58.8px;height:33.5px;background:linear-gradient(#fbfbfb,#e2e2e2);border:1px solid #a6a6a6;border-radius:5px;box-shadow:0 1px 1px rgba(0,0,0,0.15);"></div>
<div class="t" style="left:748px;top:116px;font-size:22px;line-height:30px;height:30px;font-family:'Liberation Serif';color:#444;">abc</div>
<svg style="left:782px;top:127px" width="9" height="6.5"><path d="M0 0 L9 0 L4.5 6.5 Z" fill="#444"/></svg>
<svg style="left:812px;top:116px" width="36" height="32">
<rect x="0.5" y="0.5" width="19" height="8" fill="#dbe9f8" stroke="#6a8fc0"/><rect x="14" y="3" width="5" height="2" fill="#e33"/>
<rect x="0.5" y="14" width="19" height="16" fill="#dbe9f8" stroke="#6a8fc0"/>
<path d="M22 6 Q32 10 28 22" stroke="#2c55a8" stroke-width="3" fill="none"/><path d="M22 20 L30 26 L32 16Z" fill="#2c55a8"/></svg>
<div class="t" style="left:851.6px;top:122.58px;font-size:16.5px;color:#222;">Wrap Text</div>
<svg style="left:937px;top:128px" width="9.5" height="6"><path d="M0 0 L9.5 0 L4.75 6 Z" fill="#555"/></svg>
<div style="left:599.5px;top:158px;width:132.3px;height:33px;background:linear-gradient(#ececec,#e4e4e4);border:1px solid #d2d2d2;border-radius:5px;"></div>
<div style="left:641.9px;top:159px;width:1px;height:31px;background:#d4d4d4;"></div>
<div style="left:686.9px;top:159px;width:1px;height:31px;background:#d4d4d4;"></div>
<svg style="left:606px;top:164px" width="26" height="27"><rect x="0" y="0" width="26" height="1.6" fill="#b8b8b8"/><rect x="0" y="5" width="16.9" height="1.6" fill="#b8b8b8"/><rect x="0" y="10" width="26" height="1.6" fill="#b8b8b8"/><rect x="0" y="15" width="16.9" height="1.6" fill="#b8b8b8"/><rect x="0" y="20" width="26" height="1.6" fill="#b8b8b8"/></svg>
<svg style="left:651px;top:164px" width="26" height="27"><rect x="0" y="0" width="26" height="1.6" fill="#b8b8b8"/><rect x="4.55" y="5" width="16.9" height="1.6" fill="#b8b8b8"/><rect x="0" y="10" width="26" height="1.6" fill="#b8b8b8"/><rect x="4.55" y="15" width="16.9" height="1.6" fill="#b8b8b8"/><rect x="0" y="20" width="26" height="1.6" fill="#b8b8b8"/></svg>
<svg style="left:696px;top:164px" width="26" height="27"><rect x="0" y="0" width="26" height="1.6" fill="#b8b8b8"/><rect x="9.1" y="5" width="16.9" height="1.6" fill="#b8b8b8"/><rect x="0" y="10" width="26" height="1.6" fill="#b8b8b8"/><rect x="9.1" y="15" width="16.9" height="1.6" fill="#b8b8b8"/><rect x="0" y="20" width="26" height="1.6" fill="#b8b8b8"/></svg>
<div style="left:741.8px;top:158px;width:87.2px;height:33px;background:linear-gradient(#ececec,#e4e4e4);border:1px solid #d2d2d2;border-radius:5px;"></div>
<div style="left:784.3px;top:159px;width:1px;height:31px;background:#d4d4d4;"></div>
<svg style="left:758px;top:164px" width="22" height="27"><rect x="0" y="0" width="22" height="1.6" fill="#b8b8b8"/><rect x="0" y="5" width="22" height="1.6" fill="#b8b8b8"/><rect x="0" y="10" width="22" height="1.6" fill="#b8b8b8"/><rect x="0" y="15" width="22" height="1.6" fill="#b8b8b8"/><rect x="0" y="20" width="22" height="1.6" fill="#b8b8b8"/></svg>
<svg style="left:801px;top:164px" width="22" height="27"><rect x="0" y="0" width="22" height="1.6" fill="#b8b8b8"/><rect x="0" y="5" width="22" height="1.6" fill="#b8b8b8"/><rect x="0" y="10" width="22" height="1.6" fill="#b8b8b8"/><rect x="0" y="15" width="22" height="1.6" fill="#b8b8b8"/><rect x="0" y="20" width="22" height="1.6" fill="#b8b8b8"/></svg>
<svg style="left:746px;top:168px" width="90" height="16"><path d="M0 7 L7 1 L7 4 L12 4 L12 10 L7 10 L7 13Z" fill="#8ac0e8"/><path d="M57 4 L62 4 L62 1 L69 7 L62 13 L62 10 L57 10Z" fill="#8ac0e8"/></svg>
<svg style="left:842px;top:161px" width="32" height="28"><rect x="0.5" y="0.5" width="30" height="26" fill="#f6f6f6" stroke="#c8c8c8"/><rect x="7" y="7" width="23" height="19" fill="#cfe1f3" stroke="#a8c4e0"/></svg>
<div class="t" style="left:879px;top:166.78px;font-size:16.5px;color:#9a9a9a;">Merge</div>
<svg style="left:939px;top:172.5px" width="9.5" height="6"><path d="M0 0 L9.5 0 L4.75 6 Z" fill="#aaa"/></svg>
<div style="left:973px;top:113.6px;width:247px;height:31.4px;background:#fff;border:1px solid #a0a0a0;"></div>
<div style="left:1197.3px;top:114.6px;width:21.7px;height:29.4px;background:linear-gradient(#f6f6f6,#e6e6e6);border-left:1px solid #bbb;"></div>
<svg style="left:1203px;top:126.5px" width="10" height="7"><path d="M0 0 L10 0 L5 7 Z" fill="#333"/></svg>
<div class="t" style="left:978px;top:120.61px;font-size:17px;color:#111;">General</div>
<div style="left:973px;top:158px;width:148.4px;height:33px;background:linear-gradient(#ececec,#e4e4e4);border:1px solid #d2d2d2;border-radius:5px;"></div>
<div style="left:1016.3px;top:159px;width:1px;height:31px;background:#d4d4d4;"></div>
<div style="left:1032.1px;top:159px;width:1px;height:31px;background:#d4d4d4;"></div>
<div style="left:1077.1px;top:159px;width:1px;height:31px;background:#d4d4d4;"></div>
<svg style="left:978px;top:160px" width="36" height="30" opacity="0.7">
<rect x="1" y="2" width="28" height="16" fill="#c8d8e8" stroke="#8aa8c8"/>
<ellipse cx="22" cy="27" rx="7" ry="2.5" fill="#d8d0b0" stroke="#aa9"/><ellipse cx="22" cy="22" rx="7" ry="2.5" fill="#d8d0b0" stroke="#aa9"/><ellipse cx="22" cy="17" rx="7" ry="2.5" fill="#e0d8b8" stroke="#aa9"/></svg>
<svg style="left:1020px;top:174px" width="9" height="5.5"><path d="M0 0 L9 0 L4.5 5.5 Z" fill="#aaa"/></svg>
<div class="t" style="left:1042px;top:158px;font-size:25px;line-height:30px;height:30px;color:#a8a8a8;">%</div>
<div class="t" style="left:1095px;top:149px;font-size:34px;line-height:34px;height:34px;color:#a8a8a8;font-family:'Liberation Serif';font-weight:bold;">,</div>
<div style="left:1131.4px;top:158px;width:88.6px;height:33px;background:linear-gradient(#ececec,#e4e4e4);border:1px solid #d2d2d2;border-radius:5px;"></div>
<div style="left:1174.5px;top:159px;width:1px;height:31px;background:#d4d4d4;"></div>
<div class="t" style="left:1152px;top:160px;font-size:16px;line-height:16px;height:16px;color:#a8a8a8;">.0</div><div class="t" style="left:1147px;top:174px;font-size:16px;line-height:16px;height:16px;color:#a8a8a8;">.00</div>
<div class="t" style="left:1192px;top:158px;font-size:16px;line-height:16px;height:16px;color:#a8a8a8;">.00</div><div class="t" style="left:1198px;top:171px;font-size:16px;line-height:16px;height:16px;color:#a8a8a8;">.0</div>
<svg style="left:1140px;top:163px" width="90" height="22"><path d="M0 6.5 L7 0.5 L7 3.5 L12 3.5 L12 9.5 L7 9.5 L7 12.5Z" fill="#9ccbec" stroke="#7ab0d8" stroke-width="0.6"/><path d="M49 13 L54 13 L54 10 L61 16 L54 22 L54 19 L49 19Z" fill="#9ccbec" stroke="#7ab0d8" stroke-width="0.6"/></svg>
<svg style="left:1249px;top:116px" width="66" height="50">
<g stroke="#b8c8e0" stroke-width="1" fill="#e6eef8">
<rect x="0.5" y="0.5" width="10" height="9"/><rect x="11" y="0.5" width="10" height="9" fill="#f0a0a0"/><rect x="21.5" y="0.5" width="10" height="9"/><rect x="32" y="0.5" width="10" height="9"/>
<rect x="0.5" y="10" width="10" height="9"/><rect x="11" y="10" width="21" height="9" fill="#9ab8e8"/><rect x="32" y="10" width="10" height="9"/>
<rect x="0.5" y="19.5" width="10" height="9"/><rect x="11" y="19.5" width="21" height="9" fill="#f0a0a0"/><rect x="32" y="19.5" width="10" height="9"/>
<rect x="0.5" y="29" width="10" height="9"/><rect x="11" y="29" width="10" height="9" fill="#9ab8e8"/>
</g><rect x="25" y="27" width="22" height="22" rx="3" fill="#f4f4f4" stroke="#bbb"/>
<text x="28" y="38" font-size="10" fill="#999" font-family="Liberation Sans">&lt;&#8800;</text><text x="28" y="47" font-size="10" fill="#999" font-family="Liberation Sans">=&gt;</text></svg>
<svg style="left:1302.5px;top:138px" width="8" height="5"><path d="M0 0 L8 0 L4 5 Z" fill="#aaa"/></svg>
<div class="t" style="left:1238px;top:163.78px;font-size:16.5px;color:#8a8a8a;">Conditional</div>
<div class="t" style="left:1240px;top:180.78px;font-size:16.5px;color:#8a8a8a;">Formatting</div>
<div style="left:1331.5px;top:112px;width:223.3px;height:85.8px;background:linear-gradient(#f6f6f6,#ececec);border:1.6px solid #b0b0b0;"></div>
<div style="left:1376.7px;top:119.6px;width:128.3px;height:33px;background:#f4f4f4;"></div>
<div class="t" style="left:1384px;top:123.78px;font-size:16.5px;color:#a8a8a8;">Normal</div>
<svg style="left:1578px;top:117px" width="66" height="52">
<g fill="#dde6f3" stroke="#b6c4da"><rect x="1" y="1" width="12" height="9"/><rect x="13" y="1" width="12" height="9"/>
<rect x="20" y="18" width="12" height="9" fill="#b8cce8"/><rect x="32" y="18" width="12" height="9" fill="#b8cce8"/>
<rect x="1" y="34" width="12" height="9"/><rect x="13" y="34" width="12" height="9"/><rect x="1" y="43" width="12" height="9"/><rect x="13" y="43" width="12" height="9"/></g>
<path d="M4 22 L10 17 L10 20 L17 20 L17 24 L10 24 L10 27Z" fill="#9ad68a"/></svg>
<svg style="left:1631.5px;top:139.5px" width="9" height="5.5"><path d="M0 0 L9 0 L4.5 5.5 Z" fill="#aaa"/></svg>
<div class="t" style="left:1585.4px;top:172.78px;font-size:16.5px;color:#8a8a8a;">Insert</div>
<svg style="left:1654px;top:117px" width="66" height="52">
<g fill="#dde6f3" stroke="#b6c4da"><rect x="1" y="1" width="12" height="9"/><rect x="13" y="1" width="12" height="9"/>
<rect x="24" y="18" width="12" height="9"/><rect x="36" y="18" width="12" height="9"/>
<rect x="1" y="34" width="12" height="9"/><rect x="13" y="34" width="12" height="9"/><rect x="1" y="43" width="12" height="9"/><rect x="13" y="43" width="12" height="9"/></g>
<circle cx="19" cy="22.5" r="7.5" fill="#f0a898" stroke="#d88878"/><path d="M15.5 19 L22.5 26 M22.5 19 L15.5 26" stroke="#fff" stroke-width="2"/></svg>
<svg style="left:1711px;top:139.5px" width="9" height="5.5"><path d="M0 0 L9 0 L4.5 5.5 Z" fill="#aaa"/></svg>
<div class="t" style="left:1663px;top:172.78px;font-size:16.5px;color:#8a8a8a;">Delete</div>
<svg style="left:1736px;top:116px" width="50" height="52">
<path d="M1 5 L47 5" stroke="#2a5aa8" stroke-width="1" stroke-dasharray="2 2"/><path d="M12 5 L36 5" stroke="#2a5aa8" stroke-width="2"/>
<path d="M9 5 L14 1.5 L14 8.5Z M39 5 L34 1.5 L34 8.5Z" fill="#2a5aa8"/>
<rect x="1" y="12" width="46" height="34" fill="#e8eef8" stroke="#7a9ac8" stroke-width="1.5"/>
<rect x="12" y="17" width="24" height="24" fill="#a8c0e8" stroke="#5a7ab8"/>
<path d="M1 24 L47 24 M1 36 L47 36 M12 12 L12 46 M36 12 L36 46" stroke="#9ab0d8" stroke-width="0.8"/>
<rect x="3" y="44" width="14" height="6" rx="2" fill="#fff" stroke="#7a9ac8"/><rect x="19" y="44" width="14" height="6" rx="2" fill="#fff" stroke="#7a9ac8"/></svg>
<svg style="left:1787px;top:139.5px" width="10" height="6.5"><path d="M0 0 L10 0 L5 6.5 Z" fill="#333"/></svg>
<div class="t" style="left:1740.5px;top:172.78px;font-size:16.5px;color:#111;">Format</div>
<svg style="left:1829px;top:121px" width="50" height="42">
<path d="M1 1 L36 1 L46 11 L46 40 L1 40Z" fill="#fff" stroke="#888"/><path d="M36 1 L36 11 L46 11" fill="#eee" stroke="#888"/>
<text x="3" y="24" font-family="Liberation Serif" font-size="21" fill="#2c55a8">Aa</text>
<rect x="5" y="30" width="6" height="5" rx="1" fill="#5a84c8"/><rect x="12" y="30" width="6" height="5" rx="1" fill="#d85a5a"/><rect x="19" y="30" width="6" height="5" rx="1" fill="#8ac060"/><rect x="26" y="30" width="6" height="5" rx="1" fill="#9a60c0"/><rect x="33" y="30" width="6" height="5" rx="1" fill="#e8a040"/></svg>
<svg style="left:1881px;top:138.5px" width="9" height="6"><path d="M0 0 L9 0 L4.5 6 Z" fill="#333"/></svg>
<div class="t" style="left:1830px;top:172.78px;font-size:16.5px;color:#111;">Themes</div>
<svg style="left:1911px;top:116px" width="32" height="32">
<rect x="0.5" y="0.5" width="13" height="13" rx="2" fill="#8ab0e0" stroke="#6a90c8"/><rect x="16.5" y="0.5" width="13" height="13" rx="2" fill="#e06a70" stroke="#c04a50"/>
<rect x="0.5" y="16.5" width="13" height="13" rx="2" fill="#9ad080" stroke="#7ab060"/><rect x="16.5" y="16.5" width="13" height="13" rx="2" fill="#c080d8" stroke="#a060b8"/></svg>
<svg style="left:1944px;top:127px" width="9" height="6"><path d="M0 0 L9 0 L4.5 6 Z" fill="#333"/></svg>
<div class="t" style="left:1910px;top:160px;font-size:27px;line-height:30px;height:30px;font-family:'Liberation Serif';color:#2c5ac0;">Aa</div>
<svg style="left:1944px;top:174px" width="9" height="6"><path d="M0 0 L9 0 L4.5 6 Z" fill="#333"/></svg>
<div style="left:0px;top:1384px;width:2304px;height:56px;background:#f4f4f4;"></div>
<div style="left:104px;top:1384px;width:1320px;height:27px;background:#98a8bb;"></div>
<div style="left:104px;top:1384px;width:106px;height:26px;background:linear-gradient(#f6f6f6,#e4e4e4);"></div>
<svg style="left:115px;top:1389px" width="90" height="16" opacity="0.55">
<path d="M1 1 L1 13" stroke="#666" stroke-width="1.6"/><path d="M12 1 L3.5 7 L12 13Z" fill="#666"/>
<path d="M34 1 L25 7 L34 13Z" fill="#666"/><path d="M48 1 L57 7 L48 13Z" fill="#666"/>
<path d="M71 1 L79.5 7 L71 13Z" fill="#666"/><path d="M82 1 L82 13" stroke="#666" stroke-width="1.6"/></svg>
<div style="left:232.4px;top:1384.2px;width:80.1px;height:24.8px;background:#fff;border:1px solid #8e9aa8;border-top:none;border-radius:0 0 12px 8px;"></div>
<div style="left:314.5px;top:1384.2px;width:166px;height:24.8px;background:linear-gradient(#f2f2f2,#dcdcdc);border:1px solid #8e9aa8;border-top:none;border-radius:0 0 12px 8px;"></div>
<div style="left:482.4px;top:1384.2px;width:115.3px;height:24.8px;background:linear-gradient(#f2f2f2,#dcdcdc);border:1px solid #8e9aa8;border-top:none;border-radius:0 0 12px 8px;"></div>
<div style="left:599.6px;top:1384.2px;width:250px;height:24.8px;background:linear-gradient(#f2f2f2,#dcdcdc);border:1px solid #8e9aa8;border-top:none;border-radius:0 0 12px 8px;"></div>
<div style="left:851.6px;top:1384.2px;width:33.2px;height:24.8px;background:linear-gradient(#f2f2f2,#dcdcdc);border:1px solid #8e9aa8;border-top:none;border-radius:0 0 12px 8px;"></div>
<div class="t" style="left:245.3px;top:1385.44px;font-size:17.5px;color:#111;font-weight:bold;">Cost</div>
<svg style="left:284px;top:1386px" width="18" height="21"><path d="M4 9 L4 6 Q4 1.5 8.5 1.5 Q13 1.5 13 6 L13 9" stroke="#999" stroke-width="2" fill="none"/>
<rect x="1" y="9" width="15" height="11" rx="1.5" fill="#f0a030" stroke="#c07010"/></svg>
<div class="t" style="left:330px;top:1385.44px;font-size:17.5px;color:#222;">Cost_Pie-Chart</div>
<svg style="left:449px;top:1386px" width="18" height="21"><path d="M4 9 L4 6 Q4 1.5 8.5 1.5 Q13 1.5 13 6 L13 9" stroke="#999" stroke-width="2" fill="none"/>
<rect x="1" y="9" width="15" height="11" rx="1.5" fill="#f0a030" stroke="#c07010"/></svg>
<div class="t" style="left:496px;top:1385.44px;font-size:17.5px;color:#222;">Schedule</div>
<svg style="left:567px;top:1386px" width="18" height="21"><path d="M4 9 L4 6 Q4 1.5 8.5 1.5 Q13 1.5 13 6 L13 9" stroke="#999" stroke-width="2" fill="none"/>
<rect x="1" y="9" width="15" height="11" rx="1.5" fill="#f0a030" stroke="#c07010"/></svg>
<div class="t" style="left:617px;top:1385.44px;font-size:17.5px;color:#222;">Step-by-step &amp; draw sch</div>
<svg style="left:815px;top:1386px" width="18" height="21"><path d="M4 9 L4 6 Q4 1.5 8.5 1.5 Q13 1.5 13 6 L13 9" stroke="#999" stroke-width="2" fill="none"/>
<rect x="1" y="9" width="15" height="11" rx="1.5" fill="#f0a030" stroke="#c07010"/></svg>
<div class="t" style="left:860px;top:1385.38px;font-size:22px;color:#444;font-weight:bold;">+</div>
<div style="left:104px;top:1409.6px;width:2175px;height:1.8px;background:#8c8c8c;"></div>
<div style="left:1424px;top:1384px;width:855px;height:27px;background:#fbfbfb;border-bottom:1.6px solid #a8a8a8;border-right:1.6px solid #a8a8a8;"></div>
<div style="left:1422px;top:1384px;width:2.5px;height:27px;background:#c8c8c8;"></div>
<div style="left:1430.6px;top:1392.7px;width:378.6px;height:12px;background:#c4c4c4;border-radius:6px;"></div>
<div style="left:2259.5px;top:1384px;width:1.2px;height:26px;background:#c4c4c4;"></div>
<div style="left:2265px;top:1391px;width:1.2px;height:13px;background:#999;"></div>
<div style="left:2269px;top:1391px;width:1.2px;height:13px;background:#999;"></div>
<div style="left:4.7px;top:1391.7px;width:93.3px;height:38.3px;background:linear-gradient(#f4f4f4,#dadada);border:1px solid #9a9a9a;border-radius:6px;"></div>
<div style="left:5.5px;top:1392.5px;width:46.5px;height:36.7px;background:linear-gradient(#6a6a6a,#555);border-radius:6px 0 0 6px;"></div>
<svg style="left:17px;top:1401px" width="26" height="20"><rect x="0.5" y="0.5" width="24" height="18" rx="2" fill="#2a7ad8" stroke="#6ab0f0"/>
<g fill="#8ac8ff"><rect x="3" y="3" width="4" height="3"/><rect x="8.5" y="3" width="4" height="3"/><rect x="14" y="3" width="4" height="3"/><rect x="19.5" y="3" width="3" height="3"/>
<rect x="3" y="8" width="4" height="3"/><rect x="8.5" y="8" width="4" height="3"/><rect x="14" y="8" width="4" height="3"/><rect x="19.5" y="8" width="3" height="3"/>
<rect x="3" y="13" width="4" height="3"/><rect x="8.5" y="13" width="4" height="3"/><rect x="14" y="13" width="4" height="3"/><rect x="19.5" y="13" width="3" height="3"/></g></svg>
<svg style="left:59px;top:1400px" width="34" height="22"><g fill="none" stroke="#444" stroke-width="1.6"><rect x="1" y="1" width="13" height="19" rx="1"/><rect x="18" y="1" width="13" height="19" rx="1"/></g>
<g fill="#444"><rect x="3.5" y="4" width="3" height="3"/><rect x="8.5" y="4" width="3" height="3"/><rect x="3.5" y="9" width="3" height="3"/><rect x="8.5" y="9" width="3" height="3"/><rect x="3.5" y="14" width="3" height="3"/><rect x="8.5" y="14" width="3" height="3"/>
<rect x="20.5" y="4" width="3" height="3"/><rect x="25.5" y="4" width="3" height="3"/><rect x="20.5" y="9" width="3" height="3"/><rect x="25.5" y="9" width="3" height="3"/><rect x="20.5" y="14" width="3" height="3"/><rect x="25.5" y="14" width="3" height="3"/></g></svg>
<div style="left:104px;top:1412.5px;width:2196px;height:24.5px;background:linear-gradient(#f6f6f6,#e6e6e6 60%,#dedede);"></div>
<div style="left:103.9px;top:1412.5px;width:1.6px;height:27.5px;background:#c4c4c4;"></div>
<div style="left:253.9px;top:1412.5px;width:1.6px;height:27.5px;background:#c4c4c4;"></div>
<div style="left:856.8px;top:1412.5px;width:1.6px;height:27.5px;background:#c4c4c4;"></div>
<div style="left:1111.2px;top:1412.5px;width:1.6px;height:27.5px;background:#c4c4c4;"></div>
<div style="left:1332px;top:1412.5px;width:1.6px;height:27.5px;background:#c4c4c4;"></div>
<div style="left:1388.8px;top:1412.5px;width:1.6px;height:27.5px;background:#c4c4c4;"></div>
<div style="left:1442.2px;top:1412.5px;width:1.6px;height:27.5px;background:#c4c4c4;"></div>
<div style="left:1487.8px;top:1412.5px;width:1.6px;height:27.5px;background:#c4c4c4;"></div>
<div class="t" style="left:110.9px;top:1415.59px;font-size:16.2px;color:#222;letter-spacing:0.5px;">Normal View</div>
<div class="t" style="left:265.6px;top:1415.59px;font-size:16.2px;color:#222;letter-spacing:0.5px;">Ready</div>
<div class="t" style="left:1116.3px;top:1415.66px;font-size:16px;color:#222;letter-spacing:0.3px;">Sum=0</div>
<svg style="left:1309px;top:1421.5px" width="15.6" height="9"><path d="M0 0 L15.6 0 L7.8 9 Z" fill="#111"/></svg>
</body></html>
